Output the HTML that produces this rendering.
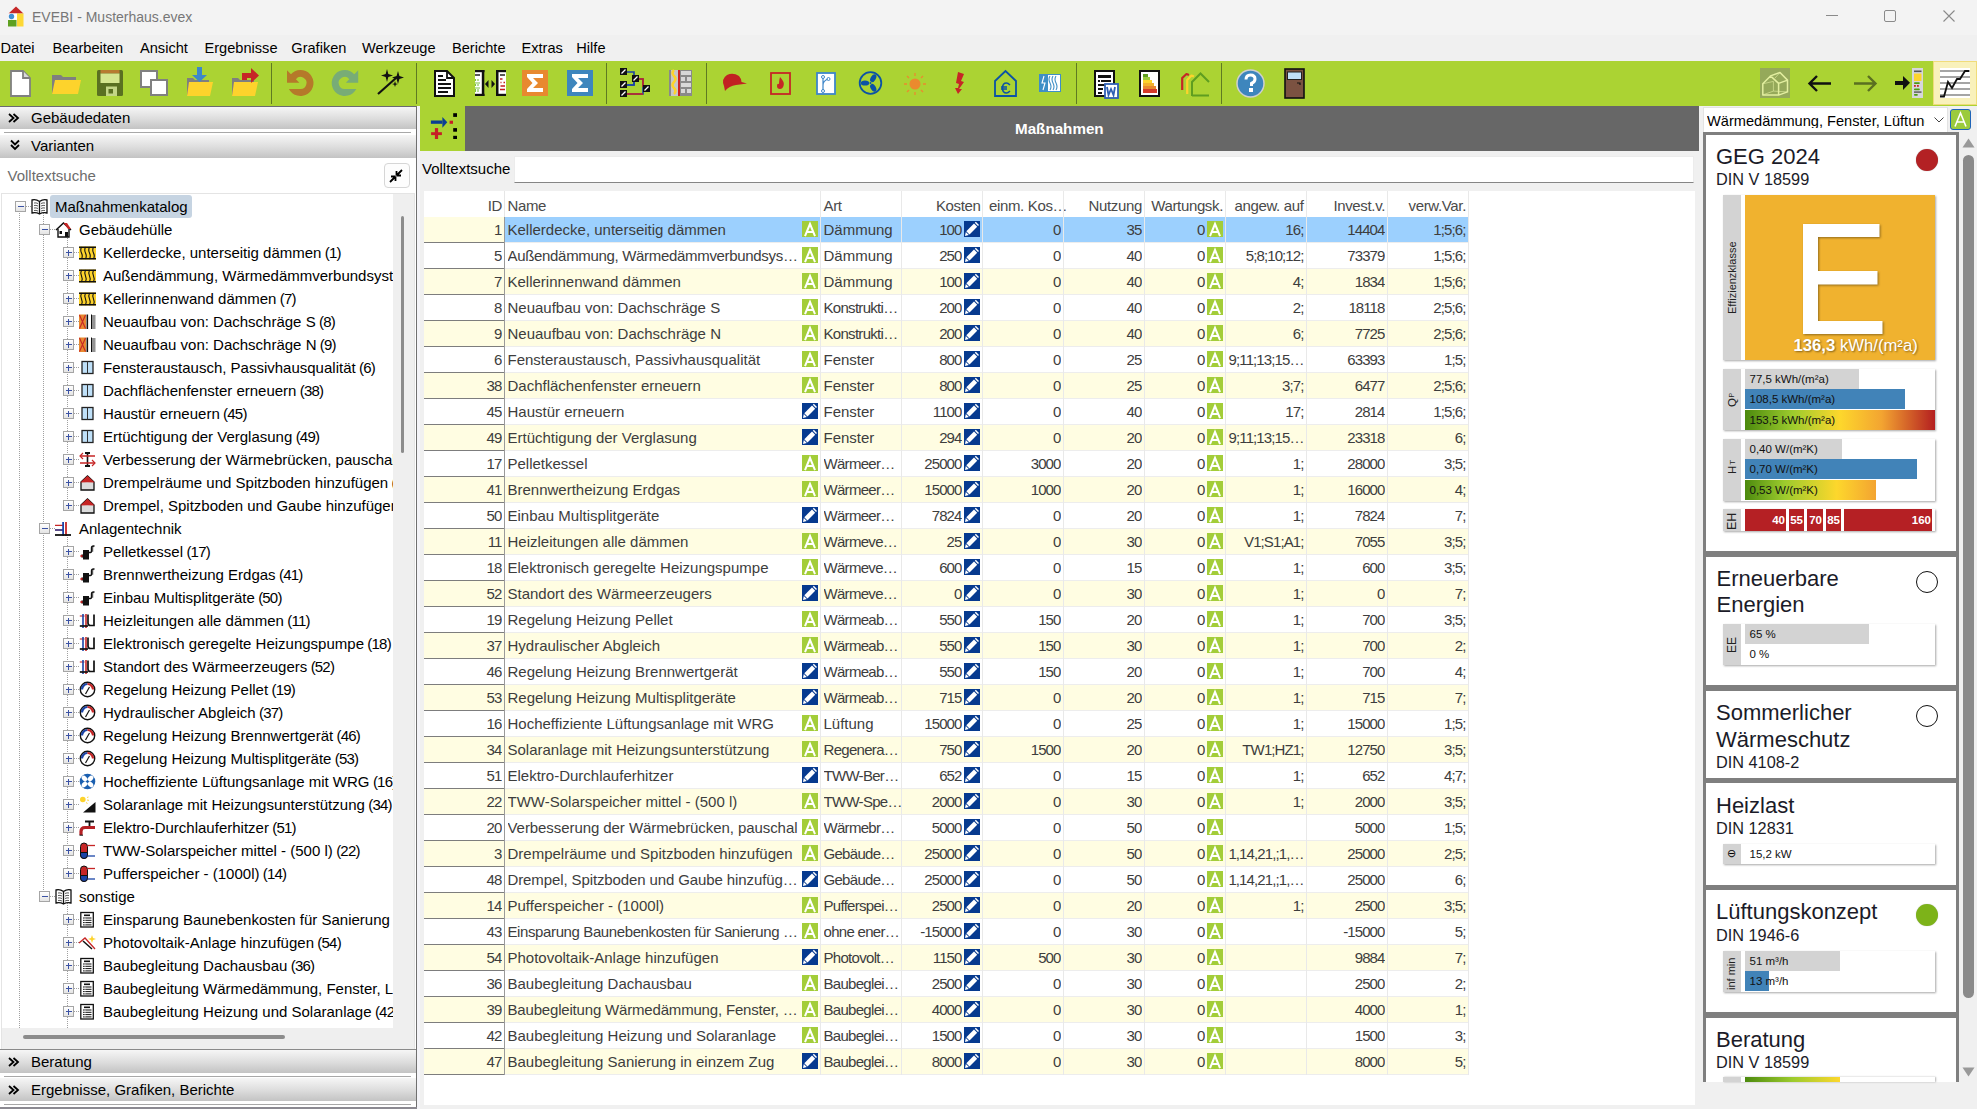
<!DOCTYPE html><html><head><meta charset="utf-8"><title>EVEBI</title><style>
*{margin:0;padding:0;box-sizing:border-box}
html,body{width:1977px;height:1109px;overflow:hidden;background:#f0f0f0;font-family:"Liberation Sans",sans-serif;color:#000}
.a{position:absolute}
.t{position:absolute;white-space:nowrap;line-height:1}
svg{position:absolute;overflow:visible}
.hdr{position:absolute;left:0;width:416px;background:linear-gradient(#f6f6f6,#dcdcdc 55%,#c3c3c3)}
.row{position:absolute;left:424px;width:1045px;height:26px}
.c{position:absolute;top:0;height:25px;line-height:25px;font-size:15px;color:#3d3d3d;white-space:nowrap;overflow:hidden}
.r{text-align:right}
.ic{position:absolute;top:4px;width:16px;height:16px}
.tr{position:absolute;height:23px;line-height:23px;font-size:15px;white-space:nowrap}
.card{position:absolute;left:1706px;width:250px;background:#fff}
.ctit{position:absolute;left:10px;font-size:21.5px;line-height:26px;color:#1b1b28;white-space:nowrap}
.csub{position:absolute;left:10px;font-size:16.3px;line-height:1;color:#1b1b28;white-space:nowrap}
.box{position:absolute;left:1723px;width:212px;background:#fff;box-shadow:1px 1px 2px rgba(0,0,0,.35)}
.strip{position:absolute;left:0;top:0;bottom:0;width:18px;background:#d3d3d3}
.bar{position:absolute;left:22px;height:20px;font-size:11.5px;line-height:20px;color:#111;padding-left:4.5px;white-space:nowrap}
.vt{position:absolute;transform:rotate(-90deg);transform-origin:0 0;font-size:11px;line-height:1;white-space:nowrap;color:#222}
</style></head><body><div class="a" style="left:0;top:0;width:1977px;height:35px;background:#f3f3f3"></div><svg style="left:8px;top:6px" width="17" height="21" viewBox="0 0 17 21"><path d="M0.5 7.5L8 0.5L15.5 7.5Z" fill="#c62828"/><rect x="0.5" y="7.5" width="8.5" height="6" fill="#fff"/><circle cx="3.5" cy="10.5" r="2.7" fill="#3f8fd2"/><rect x="0" y="14" width="8.5" height="6.5" fill="#5ea020"/><rect x="9" y="7.5" width="6.5" height="13" fill="#fdd835"/></svg><div class="t" style="left:32px;top:10px;font-size:14px;color:#777">EVEBI - Musterhaus.evex</div><div class="a" style="left:1826px;top:15px;width:12px;height:1px;background:#8a8a8a"></div><div class="a" style="left:1884px;top:10px;width:12px;height:12px;border:1px solid #8a8a8a;border-radius:2px"></div><svg style="left:1943px;top:10px" width="12" height="12"><path d="M0.5 0.5L11.5 11.5M11.5 0.5L0.5 11.5" stroke="#8a8a8a" stroke-width="1.1"/></svg><div class="t" style="left:0.5px;top:40.5px;font-size:14.6px">Datei</div><div class="t" style="left:52.5px;top:40.5px;font-size:14.6px">Bearbeiten</div><div class="t" style="left:140px;top:40.5px;font-size:14.6px">Ansicht</div><div class="t" style="left:204.5px;top:40.5px;font-size:14.6px">Ergebnisse</div><div class="t" style="left:291.3px;top:40.5px;font-size:14.6px">Grafiken</div><div class="t" style="left:362px;top:40.5px;font-size:14.6px">Werkzeuge</div><div class="t" style="left:452px;top:40.5px;font-size:14.6px">Berichte</div><div class="t" style="left:521.5px;top:40.5px;font-size:14.6px">Extras</div><div class="t" style="left:576.3px;top:40.5px;font-size:14.6px">Hilfe</div><div class="a" style="left:0;top:61px;width:1977px;height:45px;background:#abd333"></div><div class="a" style="left:1933px;top:61px;width:44px;height:44px;background:#f9f1bb;border:1px solid #f0dc7a"></div><div class="a" style="left:270.5px;top:63px;width:1px;height:41px;background:#5f7a22"></div><div class="a" style="left:415.5px;top:63px;width:1px;height:41px;background:#5f7a22"></div><div class="a" style="left:606px;top:63px;width:1px;height:41px;background:#5f7a22"></div><div class="a" style="left:705.5px;top:63px;width:1px;height:41px;background:#5f7a22"></div><div class="a" style="left:1075.5px;top:63px;width:1px;height:41px;background:#5f7a22"></div><div class="a" style="left:1220.5px;top:63px;width:1px;height:41px;background:#5f7a22"></div><svg style="left:10px;top:70px" width="21" height="27" viewBox="0 0 21 27"><path d="M1 1H13L20 8V26H1Z" fill="#fff" stroke="#808080" stroke-width="1.8"/><path d="M13 1V8H20" fill="#d9d9d9" stroke="#808080" stroke-width="1.8"/></svg><svg style="left:52px;top:74px" width="29" height="21" viewBox="0 0 29 21"><path d="M0 1H9L11 3H24V20H0Z" fill="#7f7f7f"/><path d="M3 6H29L26 20H0Z" fill="#fdd32c"/></svg><svg style="left:97px;top:70px" width="26" height="27" viewBox="0 0 26 27"><rect x="0" y="0" width="26" height="26" rx="1.5" fill="#5a7021"/><rect x="3.5" y="0" width="19" height="3.5" fill="#b77b30"/><rect x="3.5" y="3.5" width="19" height="9.5" fill="#d5e68f"/><rect x="9" y="16.5" width="11" height="9.5" fill="#c3d686"/><rect x="11.5" y="19" width="4.5" height="4.5" fill="#5a7021"/></svg><svg style="left:140px;top:70px" width="28" height="26" viewBox="0 0 28 26"><rect x="1" y="1" width="16" height="16" fill="#fff" stroke="#808080" stroke-width="2"/><rect x="11" y="10" width="16" height="15" fill="#fff" stroke="#808080" stroke-width="2"/><rect x="12" y="11" width="4" height="5" fill="#fff"/></svg><svg style="left:187px;top:67px" width="27" height="30" viewBox="0 0 27 30"><path d="M0 11H6L8 13H22V29H0Z" fill="#7f7f7f"/><path d="M2 15H26L23 29H0Z" fill="#fdd32c"/><path d="M10 0H15V8H20L12.5 15L5 8H10Z" fill="#3d87c9"/></svg><svg style="left:232px;top:67px" width="29" height="30" viewBox="0 0 29 30"><path d="M0 11H6L8 13H22V29H0Z" fill="#7f7f7f"/><path d="M2 15H26L23 29H0Z" fill="#fdd32c"/><path d="M10 10V6H19V1L27 8.5L19 16V11H15V13H10Z" fill="#c62626"/></svg><svg style="left:287px;top:70px" width="27" height="27" viewBox="0 0 27 27"><path d="M1.9 18.9A13 13 0 1 0 3.54 4.64L8.9 9.14A6 6 0 1 1 12.46 18.9Z M0 0.3V12.8H12.4Z" fill="#b5792a"/></svg><svg style="left:332px;top:70px" width="27" height="27" viewBox="0 0 27 27"><path transform="translate(26.2,0) scale(-1,1)" d="M1.9 18.9A13 13 0 1 0 3.54 4.64L8.9 9.14A6 6 0 1 1 12.46 18.9Z M0 0.3V12.8H12.4Z" fill="#78ac76"/></svg><svg style="left:377px;top:68px" width="28" height="27" viewBox="0 0 28 27"><path d="M1 26L19 10" stroke="#111" stroke-width="2.2"/><path d="M10 1L11.3 6L16 7.5L11.3 9L10 14L8.7 9L4 7.5L8.7 6Z" fill="#111"/><path d="M21 3L22.4 8L27 9.5L22.4 11L21 16L19.6 11L15 9.5L19.6 8Z" fill="#111"/><path d="M18 13L18.8 15.5L21 16L18.8 16.7L18 19L17.2 16.7L15 16L17.2 15.5Z" fill="#111"/></svg><svg style="left:434px;top:70px" width="21" height="27" viewBox="0 0 21 27"><path d="M1 1H13L20 8V26H1Z" fill="#fff" stroke="#111" stroke-width="2"/><path d="M13 1V8H20" fill="none" stroke="#111" stroke-width="1.8"/><path d="M4 6H9M4 10H12M4 14H17M4 18H17M4 22H14" stroke="#111" stroke-width="2"/></svg><svg style="left:474px;top:70px" width="32" height="27" viewBox="0 0 32 27"><rect x="1" y="0" width="9" height="26" fill="#fff"/><rect x="1" y="0" width="9.5" height="2.2" fill="#111"/><rect x="1" y="23.8" width="9.5" height="2.2" fill="#111"/><rect x="7.8" y="0" width="2.5" height="26" fill="#111"/><path d="M1 5H6" stroke="#111" stroke-width="1.4"/><path d="M1.5 9V11M4 9V11M1.5 14V16M4 14V16M1.5 19V22M4 19V22M1 13H6M1 18H6" stroke="#7cc242" stroke-width="1.1"/><path d="M11 14L14.5 10V18Z" fill="#111"/><path d="M21 14L17.5 10V18Z" fill="#111"/><rect x="22" y="0" width="10" height="26" fill="#fff"/><rect x="22" y="0" width="10" height="2.2" fill="#111"/><rect x="22" y="23.8" width="10" height="2.2" fill="#111"/><rect x="22" y="0" width="2.5" height="26" fill="#111"/><path d="M26 5H31" stroke="#111" stroke-width="1.4"/><path d="M26 9H28.5M26.5 12.5H27.5M29.5 12.5H31M26.5 16H31M26 19.5H31" stroke="#c41e1e" stroke-width="1.4"/></svg><svg style="left:522px;top:70px" width="26" height="26" viewBox="0 0 26 26"><rect width="26" height="26" fill="#e8892f"/><path d="M5 4H21V8H11L16 13L11 18H21V22H5V19L10.5 13L5 7Z" fill="#fff"/></svg><svg style="left:567px;top:70px" width="26" height="26" viewBox="0 0 26 26"><rect width="26" height="26" fill="#3e86bd"/><path d="M5 4H21V8H11L16 13L11 18H21V22H5V19L10.5 13L5 7Z" fill="#fff"/></svg><svg style="left:620px;top:68px" width="31" height="29" viewBox="0 0 31 29"><path d="M6 4H14V11M6 17H14V11M16 11H23V19M6 26H23V19" fill="none" stroke="#1a44a8" stroke-width="1.6"/><path d="M16 11H23V19M6 26H23" fill="none" stroke="#cc2222" stroke-width="1.6"/><path d="M6 17H14V13" fill="none" stroke="#1a44a8" stroke-width="1.6"/><rect x="0" y="0" width="7" height="7" fill="#111"/><rect x="12" y="7" width="7" height="7" fill="#111"/><rect x="0" y="13" width="7" height="7" fill="#111"/><rect x="0" y="22" width="7" height="7" fill="#111"/><rect x="23" y="17" width="7" height="7" fill="#111"/><path d="M1.5 5.5L5.5 1.5M13.5 12.5L17.5 8.5M1.5 18.5L5.5 14.5M1.5 27.5L5.5 23.5M24.5 22.5L28.5 18.5" stroke="#fff" stroke-width="1.3"/></svg><svg style="left:669px;top:70px" width="23" height="26" viewBox="0 0 23 26"><rect x="0" y="0" width="2" height="26" fill="#8a8a8a"/><path d="M2 0H9V26H2Z" fill="#c8c8c8"/><path d="M5 0Q2 3 5 6Q8 9 5 12Q2 15 5 18Q8 21 5 24" fill="none" stroke="#fdd32c" stroke-width="2.5"/><rect x="9" y="0" width="2" height="26" fill="#cc2222"/><rect x="11" y="0" width="12" height="26" fill="#8a8a8a"/><path d="M12 1H22V5H12ZM12 7H16V11H12ZM18 7H22V11H18ZM12 13H22V17H12ZM12 19H16V23H12ZM18 19H22V23H18Z" fill="#d8d8d8"/></svg><svg style="left:722px;top:73px" width="26" height="19" viewBox="0 0 26 19"><path d="M2 13Q-1 6 5 2Q11 -1 17 3Q19 5 19.5 9L25 10.5Q20 11 14 12Q7 13 3 18Z" fill="#c12222"/></svg><svg style="left:770px;top:72px" width="21" height="23" viewBox="0 0 21 23"><rect x="1" y="1" width="19" height="21" fill="none" stroke="#c62626" stroke-width="1.8"/><path d="M10 5Q15 10 13.5 14Q12.5 17 10 17Q7 17 7 14Q7 11 9 12Q9 8 10 5Z" fill="#c62626"/></svg><svg style="left:816px;top:72px" width="20" height="23" viewBox="0 0 20 23"><rect x="1" y="1" width="18" height="21" fill="#fff" stroke="#3e86c9" stroke-width="1.8"/><path d="M7 5V19M7 13Q7 9 12 7" fill="none" stroke="#3e86c9" stroke-width="1.2"/><circle cx="7" cy="5" r="1.5" fill="#fff" stroke="#3e86c9"/><circle cx="7" cy="19" r="1.5" fill="#fff" stroke="#3e86c9"/><circle cx="12.5" cy="7" r="1.5" fill="#fff" stroke="#3e86c9"/></svg><svg style="left:858px;top:71px" width="25" height="24" viewBox="0 0 25 24"><circle cx="12.5" cy="12" r="10.8" fill="none" stroke="#0b52a6" stroke-width="1.8"/><g fill="#0b52a6"><ellipse cx="12.5" cy="6.5" rx="2.6" ry="4.2" transform="rotate(30 12.5 12)"/><ellipse cx="12.5" cy="6.5" rx="2.6" ry="4.2" transform="rotate(150 12.5 12)"/><ellipse cx="12.5" cy="6.5" rx="2.6" ry="4.2" transform="rotate(270 12.5 12)"/><circle cx="12.5" cy="12" r="1"/></g></svg><svg style="left:904px;top:72px" width="22" height="24" viewBox="0 0 22 24"><circle cx="11" cy="12" r="5.5" fill="#ea8a2e"/><g stroke="#ea8a2e" stroke-width="1.3"><path d="M11 1V4M11 20V23M0 12H3M19 12H22M3 4L5 6M17 18L19 20M3 20L5 18M17 6L19 4"/></g></svg><svg style="left:955px;top:72px" width="10" height="22" viewBox="0 0 10 22"><path d="M3 0L9 2L6 9L9 10L4 17L7 17L3 22L0 16L3 16L4 12L1 11Z" fill="#c62626"/></svg><svg style="left:994px;top:70px" width="23" height="27" viewBox="0 0 23 27"><path d="M1 11L11.5 1L22 11V26H1Z" fill="none" stroke="#0b52a6" stroke-width="1.8"/><path d="M16 15Q14 13 12.5 13Q8.5 13 8.5 18Q8.5 23 12.5 23Q14 23 16 21M7 17H13M7 19H13" fill="none" stroke="#0b52a6" stroke-width="1.5"/></svg><svg style="left:1039px;top:74px" width="23" height="19" viewBox="0 0 23 19"><rect width="22" height="18" fill="#3e8fc6"/><path d="M5 2L3 9H6L4 16" fill="none" stroke="#fff" stroke-width="1.1"/><rect x="9" y="1" width="12" height="16" fill="#fff"/><path d="M11 2Q9 5 11 9Q13 13 11 16M14 2Q12 5 14 9Q16 13 14 16M17 2Q15 5 17 9Q19 13 17 16" fill="none" stroke="#3e8fc6" stroke-width="1.1"/></svg><svg style="left:1094px;top:70px" width="25" height="29" viewBox="0 0 25 29"><rect x="1" y="1" width="19" height="25" fill="#fff" stroke="#111" stroke-width="2"/><path d="M4 5H17V8H4Z M7 10H17V12H7Z M4 10H6V12H4Z M4 14H11V16H4Z M4 18H9V20H4Z M4 22H8V24H4Z" fill="#111"/><rect x="11" y="14" width="13" height="14" fill="#fff" stroke="#2e5fb4" stroke-width="1.8"/><path d="M13 17L14.5 25L17 19L19.5 25L21 17" fill="none" stroke="#2e5fb4" stroke-width="1.8"/></svg><svg style="left:1139px;top:70px" width="21" height="27" viewBox="0 0 21 27"><rect x="1" y="1" width="19" height="25" fill="#fff" stroke="#111" stroke-width="2"/><rect x="4" y="4" width="5" height="3" fill="#5e9e20"/><rect x="4" y="7" width="7" height="3" fill="#9bcb3c"/><rect x="4" y="10" width="9" height="3" fill="#fdd32c"/><rect x="4" y="13" width="11" height="3" fill="#f2b02f"/><rect x="4" y="16" width="13" height="3" fill="#e8892f"/><rect x="4" y="19" width="14" height="4" fill="#d63b2b"/></svg><svg style="left:1181px;top:71px" width="30" height="26" viewBox="0 0 30 26"><path d="M1.2 19V7L5.5 3L8 4" fill="none" stroke="#c62626" stroke-width="2.2" stroke-linejoin="round"/><path d="M6.2 23V9L10.5 4.5L13 5.5" fill="none" stroke="#fdd32c" stroke-width="2.2" stroke-linejoin="round"/><path d="M11 25V11L19.5 2.5L28 11M11 24.5H28" fill="none" stroke="#5e9e20" stroke-width="2"/></svg><svg style="left:1236px;top:69px" width="29" height="29" viewBox="0 0 29 29"><circle cx="14.5" cy="14.5" r="13.5" fill="#3e86bd" stroke="#d0d0d0" stroke-width="1.5"/><path d="M10 10.5Q10 6 14.5 6Q19 6 19 10Q19 13 15.5 14.5V17" fill="none" stroke="#fff" stroke-width="3"/><rect x="13" y="19" width="4" height="4" fill="#fff"/></svg><svg style="left:1284px;top:68px" width="21" height="31" viewBox="0 0 21 31"><rect x="1" y="1" width="19" height="29" fill="#7b5241" stroke="#111" stroke-width="1.6"/><rect x="3.5" y="4" width="14" height="7.5" fill="#bfe0f8" stroke="#222" stroke-width="1"/><path d="M13 15H16V17" fill="none" stroke="#111" stroke-width="1.2"/></svg><svg style="left:1760px;top:68px" width="30" height="30" viewBox="0 0 30 30"><rect width="30" height="30" fill="#95a95a"/><g fill="none" stroke="#e3efa0" stroke-linejoin="round"><path d="M2.8 26.9V15.8L10.5 7.9L20 4.5L27.5 12.1V23.9L18.6 27.1Z M10.5 7.9L18.6 15.4V27.1 M18.6 15.4L27.5 12.1" stroke-width="1.5"/><path d="M2.8 15.8L13.4 13.4V23.1L2.8 26.9 M13.4 23.1L27.5 23.9 M20 4.5L15 10" stroke-width="1" opacity=".6"/></g></svg><svg style="left:1807px;top:74px" width="25" height="19" viewBox="0 0 25 19"><path d="M24 9.5H3M10 2L2.5 9.5L10 17" fill="none" stroke="#111" stroke-width="2.4"/></svg><svg style="left:1854px;top:74px" width="25" height="19" viewBox="0 0 25 19"><path d="M0 9.5H21M14 2L21.5 9.5L14 17" fill="none" stroke="#5a7021" stroke-width="2.4"/></svg><svg style="left:1894px;top:68px" width="30" height="30" viewBox="0 0 30 30"><path d="M1 13H9V8L16 14.8L9 22V17H1Z" fill="#111"/><rect x="18" y="0" width="11" height="30" fill="#d6d6dc"/><rect x="20" y="2.5" width="7.5" height="1.6" fill="#555"/><rect x="20" y="5.5" width="7.5" height="7.5" fill="#fdd32c"/><rect x="20" y="14.3" width="5.8" height="1.7" rx=".8" fill="#4c9a10"/><rect x="20" y="17" width="1.8" height="1.8" fill="#c62626"/><rect x="23" y="17" width="1.8" height="1.8" fill="#c62626"/><rect x="20" y="20.5" width="5.8" height="1.7" rx=".8" fill="#4c9a10"/><rect x="20" y="23.3" width="7.5" height="1.6" fill="#666"/><rect x="20" y="26" width="3.8" height="1.7" rx=".8" fill="#4c9a10"/></svg><svg style="left:1940px;top:68px" width="31" height="30" viewBox="0 0 31 30"><rect width="30" height="30" fill="#fff"/><path d="M0 3H30M0 9H30M0 15H30M0 21H30M0 27H30" stroke="#888" stroke-width="1.6"/><path d="M0 28.5H4L8 14L12 20L17 11H20L25 3H29" fill="none" stroke="#111" stroke-width="1.8"/></svg><div class="a" style="left:0;top:106px;width:417px;height:1003px;background:#fff;border-right:1px solid #707070;border-top:1px solid #6a6a72"></div><div class="a" style="left:417px;top:106px;width:3px;height:1003px;background:#f4f4f8"></div><div class="hdr" style="top:107px;height:22px"></div><div class="a" style="left:4px;top:132px;width:407px;height:1px;background:#a8a8a8"></div><div class="hdr" style="top:135px;height:23px"></div><svg style="left:8px;top:113px" width="11" height="10"><path d="M1 1L5.5 5L1 9M5.5 1L10 5L5.5 9" fill="none" stroke="#000" stroke-width="1.8"/></svg><div class="t" style="left:31px;top:109.5px;font-size:15px">Gebäudedaten</div><svg style="left:10px;top:139px" width="10" height="12"><path d="M1 1.5L5 5.5L9 1.5M1 6L5 10L9 6" fill="none" stroke="#000" stroke-width="1.8"/></svg><div class="t" style="left:31px;top:137.5px;font-size:15px">Varianten</div><div class="t" style="left:7.5px;top:168px;font-size:15px;color:#6d6d6d">Volltextsuche</div><div class="a" style="left:384px;top:163px;width:26px;height:25px;border:1px solid #d6d6d6;border-radius:4px;background:#fdfdfd"></div><svg style="left:386px;top:166px" width="20" height="20"><path d="M4 16L9.5 10.5M9.5 10.5V15M9.5 10.5H5M16 4L10.5 9.5M10.5 9.5V5M10.5 9.5H15" fill="none" stroke="#000" stroke-width="1.8"/></svg><div class="a" style="left:1px;top:193px;width:414px;height:857px;background:#efefef;border:1px solid #e4e4e4"></div><div class="a" style="left:2px;top:194px;width:391px;height:834px;background:#fff"></div><div class="a" style="left:401px;top:216px;width:3px;height:237px;background:#8c8c8c;border-radius:2px"></div><div class="a" style="left:23px;top:1035px;width:262px;height:3.5px;background:#8c8c8c;border-radius:2px"></div><div class="a" style="left:2px;top:194px;width:391px;height:834px;overflow:hidden"><div class="a" style="left:-2px;top:-194px;width:420px;height:1300px"><div class="a" style="left:19px;top:213px;width:1px;height:817px;background:repeating-linear-gradient(#a0a0a0 0 1px,transparent 1px 2px)"></div><div class="a" style="left:43px;top:213px;width:1px;height:683px;background:repeating-linear-gradient(#a0a0a0 0 1px,transparent 1px 2px)"></div><div class="a" style="left:44px;top:229px;width:11px;height:1px;background:repeating-linear-gradient(90deg,#a0a0a0 0 1px,transparent 1px 2px)"></div><div class="a" style="left:44px;top:528px;width:11px;height:1px;background:repeating-linear-gradient(90deg,#a0a0a0 0 1px,transparent 1px 2px)"></div><div class="a" style="left:44px;top:896px;width:11px;height:1px;background:repeating-linear-gradient(90deg,#a0a0a0 0 1px,transparent 1px 2px)"></div><div class="a" style="left:67px;top:236px;width:1px;height:269px;background:repeating-linear-gradient(#a0a0a0 0 1px,transparent 1px 2px)"></div><div class="a" style="left:67px;top:535px;width:1px;height:338px;background:repeating-linear-gradient(#a0a0a0 0 1px,transparent 1px 2px)"></div><div class="a" style="left:67px;top:903px;width:1px;height:128px;background:repeating-linear-gradient(#a0a0a0 0 1px,transparent 1px 2px)"></div><div class="a" style="left:26px;top:206px;width:5px;height:1px;background:repeating-linear-gradient(90deg,#a0a0a0 0 1px,transparent 1px 2px)"></div><div class="a" style="left:15px;top:200.5px;width:11px;height:11px;border:1px solid #a5a5a5;background:linear-gradient(#fff,#e4e4e4)"></div><div class="a" style="left:17.5px;top:206px;width:6px;height:1.2px;background:#3b52a4"></div><svg style="left:31px;top:198px" width="17" height="17" viewBox="0 0 17 17"><path d="M8.5 3.5Q5 1 1 2V15Q5 14 8.5 16Q12 14 16 15V2Q12 1 8.5 3.5V16" fill="#fff" stroke="#111" stroke-width="1.3"/><path d="M3 5Q5 4.5 7 5.5M3 7.5Q5 7 7 8M3 10Q5 9.5 7 10.5M3 12.5Q5 12 7 13M10 5.5Q12 4.5 14 5M10 8Q12 7 14 7.5M10 10.5Q12 9.5 14 10M10 13Q12 12 14 12.5" stroke="#333" stroke-width="0.8" fill="none"/></svg><div class="a" style="left:50px;top:195px;width:142px;height:23px;background:#c6d4e2;border-radius:3px"></div><div class="tr" style="left:55px;top:195px">Maßnahmenkatalog</div><div class="a" style="left:50px;top:229px;width:5px;height:1px;background:repeating-linear-gradient(90deg,#a0a0a0 0 1px,transparent 1px 2px)"></div><div class="a" style="left:39px;top:223.5px;width:11px;height:11px;border:1px solid #a5a5a5;background:linear-gradient(#fff,#e4e4e4)"></div><div class="a" style="left:41.5px;top:229px;width:6px;height:1.2px;background:#3b52a4"></div><svg style="left:55px;top:221px" width="17" height="17" viewBox="0 0 17 17"><path d="M1 9L8.5 2L16 9" fill="none" stroke="#111" stroke-width="1.5"/><path d="M8.5 2L12 2L16 8L13 8Z" fill="#c62626"/><path d="M3 8V16H14V8" fill="#fff" stroke="#111" stroke-width="1.4"/><rect x="4.5" y="10" width="2.5" height="3" fill="#111"/><rect x="10" y="11" width="3" height="5" fill="#111"/></svg><div class="tr" style="left:79px;top:218px">Gebäudehülle</div><div class="a" style="left:74px;top:252px;width:5px;height:1px;background:repeating-linear-gradient(90deg,#a0a0a0 0 1px,transparent 1px 2px)"></div><div class="a" style="left:63px;top:246.5px;width:11px;height:11px;border:1px solid #a5a5a5;background:linear-gradient(#fff,#e4e4e4)"></div><div class="a" style="left:65.5px;top:252px;width:6px;height:1.2px;background:#3b52a4"></div><div class="a" style="left:68px;top:249.5px;width:1.2px;height:6px;background:#3b52a4"></div><svg style="left:79px;top:244px" width="17" height="17" viewBox="0 0 17 17"><rect x="0" y="2.5" width="17" height="13" fill="#fdd32c"/><path d="M0 3.2H17M0 14.8H17" stroke="#111" stroke-width="1.4"/><path d="M2.5 3Q1 6 2.5 9Q4 12 2.5 15M6.5 3Q5 6 6.5 9Q8 12 6.5 15M10.5 3Q9 6 10.5 9Q12 12 10.5 15M14.5 3Q13 6 14.5 9Q16 12 14.5 15" fill="none" stroke="#111" stroke-width="1.1"/></svg><div class="tr" style="left:103px;top:241px">Kellerdecke, unterseitig dämmen<span style="letter-spacing:-0.8px"> (1)</span></div><div class="a" style="left:74px;top:275px;width:5px;height:1px;background:repeating-linear-gradient(90deg,#a0a0a0 0 1px,transparent 1px 2px)"></div><div class="a" style="left:63px;top:269.5px;width:11px;height:11px;border:1px solid #a5a5a5;background:linear-gradient(#fff,#e4e4e4)"></div><div class="a" style="left:65.5px;top:275px;width:6px;height:1.2px;background:#3b52a4"></div><div class="a" style="left:68px;top:272.5px;width:1.2px;height:6px;background:#3b52a4"></div><svg style="left:79px;top:267px" width="17" height="17" viewBox="0 0 17 17"><rect x="0" y="2.5" width="17" height="13" fill="#fdd32c"/><path d="M0 3.2H17M0 14.8H17" stroke="#111" stroke-width="1.4"/><path d="M2.5 3Q1 6 2.5 9Q4 12 2.5 15M6.5 3Q5 6 6.5 9Q8 12 6.5 15M10.5 3Q9 6 10.5 9Q12 12 10.5 15M14.5 3Q13 6 14.5 9Q16 12 14.5 15" fill="none" stroke="#111" stroke-width="1.1"/></svg><div class="tr" style="left:103px;top:264px">Außendämmung, Wärmedämmverbundsystem<span style="letter-spacing:-0.8px"> (5)</span></div><div class="a" style="left:74px;top:298px;width:5px;height:1px;background:repeating-linear-gradient(90deg,#a0a0a0 0 1px,transparent 1px 2px)"></div><div class="a" style="left:63px;top:292.5px;width:11px;height:11px;border:1px solid #a5a5a5;background:linear-gradient(#fff,#e4e4e4)"></div><div class="a" style="left:65.5px;top:298px;width:6px;height:1.2px;background:#3b52a4"></div><div class="a" style="left:68px;top:295.5px;width:1.2px;height:6px;background:#3b52a4"></div><svg style="left:79px;top:290px" width="17" height="17" viewBox="0 0 17 17"><rect x="0" y="2.5" width="17" height="13" fill="#fdd32c"/><path d="M0 3.2H17M0 14.8H17" stroke="#111" stroke-width="1.4"/><path d="M2.5 3Q1 6 2.5 9Q4 12 2.5 15M6.5 3Q5 6 6.5 9Q8 12 6.5 15M10.5 3Q9 6 10.5 9Q12 12 10.5 15M14.5 3Q13 6 14.5 9Q16 12 14.5 15" fill="none" stroke="#111" stroke-width="1.1"/></svg><div class="tr" style="left:103px;top:287px">Kellerinnenwand dämmen<span style="letter-spacing:-0.8px"> (7)</span></div><div class="a" style="left:74px;top:321px;width:5px;height:1px;background:repeating-linear-gradient(90deg,#a0a0a0 0 1px,transparent 1px 2px)"></div><div class="a" style="left:63px;top:315.5px;width:11px;height:11px;border:1px solid #a5a5a5;background:linear-gradient(#fff,#e4e4e4)"></div><div class="a" style="left:65.5px;top:321px;width:6px;height:1.2px;background:#3b52a4"></div><div class="a" style="left:68px;top:318.5px;width:1.2px;height:6px;background:#3b52a4"></div><svg style="left:79px;top:313px" width="17" height="17" viewBox="0 0 17 17"><rect x="0" y="1.5" width="7" height="14.5" fill="#e8892f"/><path d="M0.5 2L6.5 15.5M6.5 2L0.5 15.5" stroke="#c62626" stroke-width="1.1"/><rect x="7.5" y="1.5" width="1.6" height="14.5" fill="#111"/><rect x="12" y="1.5" width="4.5" height="14.5" fill="#fff"/><path d="M12.5 1.5V16" stroke="#111" stroke-width="1"/><path d="M12.5 3H16.5M12.5 5H16.5M12.5 7H16.5M12.5 9H16.5M12.5 11H16.5M12.5 13H16.5M12.5 15H16.5" stroke="#111" stroke-width="0.9"/></svg><div class="tr" style="left:103px;top:310px">Neuaufbau von: Dachschräge S<span style="letter-spacing:-0.8px"> (8)</span></div><div class="a" style="left:74px;top:344px;width:5px;height:1px;background:repeating-linear-gradient(90deg,#a0a0a0 0 1px,transparent 1px 2px)"></div><div class="a" style="left:63px;top:338.5px;width:11px;height:11px;border:1px solid #a5a5a5;background:linear-gradient(#fff,#e4e4e4)"></div><div class="a" style="left:65.5px;top:344px;width:6px;height:1.2px;background:#3b52a4"></div><div class="a" style="left:68px;top:341.5px;width:1.2px;height:6px;background:#3b52a4"></div><svg style="left:79px;top:336px" width="17" height="17" viewBox="0 0 17 17"><rect x="0" y="1.5" width="7" height="14.5" fill="#e8892f"/><path d="M0.5 2L6.5 15.5M6.5 2L0.5 15.5" stroke="#c62626" stroke-width="1.1"/><rect x="7.5" y="1.5" width="1.6" height="14.5" fill="#111"/><rect x="12" y="1.5" width="4.5" height="14.5" fill="#fff"/><path d="M12.5 1.5V16" stroke="#111" stroke-width="1"/><path d="M12.5 3H16.5M12.5 5H16.5M12.5 7H16.5M12.5 9H16.5M12.5 11H16.5M12.5 13H16.5M12.5 15H16.5" stroke="#111" stroke-width="0.9"/></svg><div class="tr" style="left:103px;top:333px">Neuaufbau von: Dachschräge N<span style="letter-spacing:-0.8px"> (9)</span></div><div class="a" style="left:74px;top:367px;width:5px;height:1px;background:repeating-linear-gradient(90deg,#a0a0a0 0 1px,transparent 1px 2px)"></div><div class="a" style="left:63px;top:361.5px;width:11px;height:11px;border:1px solid #a5a5a5;background:linear-gradient(#fff,#e4e4e4)"></div><div class="a" style="left:65.5px;top:367px;width:6px;height:1.2px;background:#3b52a4"></div><div class="a" style="left:68px;top:364.5px;width:1.2px;height:6px;background:#3b52a4"></div><svg style="left:79px;top:359px" width="17" height="17" viewBox="0 0 17 17"><rect x="3" y="2.5" width="11" height="12" fill="#bfe0f8" stroke="#222" stroke-width="1.3"/><path d="M8.5 2.5V14.5" stroke="#333" stroke-width="1"/></svg><div class="tr" style="left:103px;top:356px">Fensteraustausch, Passivhausqualität<span style="letter-spacing:-0.8px"> (6)</span></div><div class="a" style="left:74px;top:390px;width:5px;height:1px;background:repeating-linear-gradient(90deg,#a0a0a0 0 1px,transparent 1px 2px)"></div><div class="a" style="left:63px;top:384.5px;width:11px;height:11px;border:1px solid #a5a5a5;background:linear-gradient(#fff,#e4e4e4)"></div><div class="a" style="left:65.5px;top:390px;width:6px;height:1.2px;background:#3b52a4"></div><div class="a" style="left:68px;top:387.5px;width:1.2px;height:6px;background:#3b52a4"></div><svg style="left:79px;top:382px" width="17" height="17" viewBox="0 0 17 17"><rect x="3" y="2.5" width="11" height="12" fill="#bfe0f8" stroke="#222" stroke-width="1.3"/><path d="M8.5 2.5V14.5" stroke="#333" stroke-width="1"/></svg><div class="tr" style="left:103px;top:379px">Dachflächenfenster erneuern<span style="letter-spacing:-0.8px"> (38)</span></div><div class="a" style="left:74px;top:413px;width:5px;height:1px;background:repeating-linear-gradient(90deg,#a0a0a0 0 1px,transparent 1px 2px)"></div><div class="a" style="left:63px;top:407.5px;width:11px;height:11px;border:1px solid #a5a5a5;background:linear-gradient(#fff,#e4e4e4)"></div><div class="a" style="left:65.5px;top:413px;width:6px;height:1.2px;background:#3b52a4"></div><div class="a" style="left:68px;top:410.5px;width:1.2px;height:6px;background:#3b52a4"></div><svg style="left:79px;top:405px" width="17" height="17" viewBox="0 0 17 17"><rect x="3" y="2.5" width="11" height="12" fill="#bfe0f8" stroke="#222" stroke-width="1.3"/><path d="M8.5 2.5V14.5" stroke="#333" stroke-width="1"/></svg><div class="tr" style="left:103px;top:402px">Haustür erneuern<span style="letter-spacing:-0.8px"> (45)</span></div><div class="a" style="left:74px;top:436px;width:5px;height:1px;background:repeating-linear-gradient(90deg,#a0a0a0 0 1px,transparent 1px 2px)"></div><div class="a" style="left:63px;top:430.5px;width:11px;height:11px;border:1px solid #a5a5a5;background:linear-gradient(#fff,#e4e4e4)"></div><div class="a" style="left:65.5px;top:436px;width:6px;height:1.2px;background:#3b52a4"></div><div class="a" style="left:68px;top:433.5px;width:1.2px;height:6px;background:#3b52a4"></div><svg style="left:79px;top:428px" width="17" height="17" viewBox="0 0 17 17"><rect x="3" y="2.5" width="11" height="12" fill="#bfe0f8" stroke="#222" stroke-width="1.3"/><path d="M8.5 2.5V14.5" stroke="#333" stroke-width="1"/></svg><div class="tr" style="left:103px;top:425px">Ertüchtigung der Verglasung<span style="letter-spacing:-0.8px"> (49)</span></div><div class="a" style="left:74px;top:459px;width:5px;height:1px;background:repeating-linear-gradient(90deg,#a0a0a0 0 1px,transparent 1px 2px)"></div><div class="a" style="left:63px;top:453.5px;width:11px;height:11px;border:1px solid #a5a5a5;background:linear-gradient(#fff,#e4e4e4)"></div><div class="a" style="left:65.5px;top:459px;width:6px;height:1.2px;background:#3b52a4"></div><div class="a" style="left:68px;top:456.5px;width:1.2px;height:6px;background:#3b52a4"></div><svg style="left:79px;top:451px" width="17" height="17" viewBox="0 0 17 17"><path d="M8.5 3V14" stroke="#111" stroke-width="1.6"/><path d="M1 5H16M1 12H16" stroke="#c62626" stroke-width="1.5"/><path d="M4 2L1 5L4 8M13 9L16 12L13 15" fill="none" stroke="#c62626" stroke-width="1.2"/><rect x="6" y="1" width="5" height="2" fill="#111"/><rect x="6" y="14" width="5" height="2" fill="#111"/></svg><div class="tr" style="left:103px;top:448px">Verbesserung der Wärmebrücken, pauschal<span style="letter-spacing:-0.8px"> (20)</span></div><div class="a" style="left:74px;top:482px;width:5px;height:1px;background:repeating-linear-gradient(90deg,#a0a0a0 0 1px,transparent 1px 2px)"></div><div class="a" style="left:63px;top:476.5px;width:11px;height:11px;border:1px solid #a5a5a5;background:linear-gradient(#fff,#e4e4e4)"></div><div class="a" style="left:65.5px;top:482px;width:6px;height:1.2px;background:#3b52a4"></div><div class="a" style="left:68px;top:479.5px;width:1.2px;height:6px;background:#3b52a4"></div><svg style="left:79px;top:474px" width="17" height="17" viewBox="0 0 17 17"><path d="M2 8L8.5 2L15 8V16H2Z" fill="#dcdcdc" stroke="#111" stroke-width="1.3"/><path d="M1.5 8.5L8.5 2L15.5 8.5L15 8Z" fill="#c62626"/><path d="M2 8L8.5 2L15 8L13 8L8.5 4L4 8Z" fill="#c62626"/></svg><div class="tr" style="left:103px;top:471px">Drempelräume und Spitzboden hinzufügen<span style="letter-spacing:-0.8px"> (3)</span></div><div class="a" style="left:74px;top:505px;width:5px;height:1px;background:repeating-linear-gradient(90deg,#a0a0a0 0 1px,transparent 1px 2px)"></div><div class="a" style="left:63px;top:499.5px;width:11px;height:11px;border:1px solid #a5a5a5;background:linear-gradient(#fff,#e4e4e4)"></div><div class="a" style="left:65.5px;top:505px;width:6px;height:1.2px;background:#3b52a4"></div><div class="a" style="left:68px;top:502.5px;width:1.2px;height:6px;background:#3b52a4"></div><svg style="left:79px;top:497px" width="17" height="17" viewBox="0 0 17 17"><path d="M2 8L8.5 2L15 8V16H2Z" fill="#dcdcdc" stroke="#111" stroke-width="1.3"/><path d="M1.5 8.5L8.5 2L15.5 8.5L15 8Z" fill="#c62626"/><path d="M2 8L8.5 2L15 8L13 8L8.5 4L4 8Z" fill="#c62626"/></svg><div class="tr" style="left:103px;top:494px">Drempel, Spitzboden und Gaube hinzufügen<span style="letter-spacing:-0.8px"> (48)</span></div><div class="a" style="left:50px;top:528px;width:5px;height:1px;background:repeating-linear-gradient(90deg,#a0a0a0 0 1px,transparent 1px 2px)"></div><div class="a" style="left:39px;top:522.5px;width:11px;height:11px;border:1px solid #a5a5a5;background:linear-gradient(#fff,#e4e4e4)"></div><div class="a" style="left:41.5px;top:528px;width:6px;height:1.2px;background:#3b52a4"></div><svg style="left:55px;top:520px" width="17" height="17" viewBox="0 0 17 17"><path d="M0 5.3H8M0 10H8" stroke="#c62626" stroke-width="1.3"/><path d="M0 10H8" stroke="#1a44a8" stroke-width="1.3"/><path d="M8.1 2V16" stroke="#1a44a8" stroke-width="1.8"/><path d="M11 2V16" stroke="#c62626" stroke-width="1.8"/><path d="M0 15H16" stroke="#111" stroke-width="1.8"/></svg><div class="tr" style="left:79px;top:517px">Anlagentechnik</div><div class="a" style="left:74px;top:551px;width:5px;height:1px;background:repeating-linear-gradient(90deg,#a0a0a0 0 1px,transparent 1px 2px)"></div><div class="a" style="left:63px;top:545.5px;width:11px;height:11px;border:1px solid #a5a5a5;background:linear-gradient(#fff,#e4e4e4)"></div><div class="a" style="left:65.5px;top:551px;width:6px;height:1.2px;background:#3b52a4"></div><div class="a" style="left:68px;top:548.5px;width:1.2px;height:6px;background:#3b52a4"></div><svg style="left:79px;top:543px" width="17" height="17" viewBox="0 0 17 17"><rect x="4" y="7" width="6" height="9.5" fill="#111"/><rect x="2.5" y="11.5" width="3" height="3" fill="#111"/><circle cx="2.5" cy="13" r="1.2" fill="#c62626"/><path d="M9.5 9.5H11.5Q12.5 9.5 12.5 8V5Q12.5 3 14.5 3H15.5" fill="none" stroke="#111" stroke-width="1.4"/><path d="M14.5 3.2Q13.7 3.6 13.7 5V8.8" fill="none" stroke="#111" stroke-width="0.8"/></svg><div class="tr" style="left:103px;top:540px">Pelletkessel<span style="letter-spacing:-0.8px"> (17)</span></div><div class="a" style="left:74px;top:574px;width:5px;height:1px;background:repeating-linear-gradient(90deg,#a0a0a0 0 1px,transparent 1px 2px)"></div><div class="a" style="left:63px;top:568.5px;width:11px;height:11px;border:1px solid #a5a5a5;background:linear-gradient(#fff,#e4e4e4)"></div><div class="a" style="left:65.5px;top:574px;width:6px;height:1.2px;background:#3b52a4"></div><div class="a" style="left:68px;top:571.5px;width:1.2px;height:6px;background:#3b52a4"></div><svg style="left:79px;top:566px" width="17" height="17" viewBox="0 0 17 17"><rect x="4" y="7" width="6" height="9.5" fill="#111"/><rect x="2.5" y="11.5" width="3" height="3" fill="#111"/><circle cx="2.5" cy="13" r="1.2" fill="#c62626"/><path d="M9.5 9.5H11.5Q12.5 9.5 12.5 8V5Q12.5 3 14.5 3H15.5" fill="none" stroke="#111" stroke-width="1.4"/><path d="M14.5 3.2Q13.7 3.6 13.7 5V8.8" fill="none" stroke="#111" stroke-width="0.8"/></svg><div class="tr" style="left:103px;top:563px">Brennwertheizung Erdgas<span style="letter-spacing:-0.8px"> (41)</span></div><div class="a" style="left:74px;top:597px;width:5px;height:1px;background:repeating-linear-gradient(90deg,#a0a0a0 0 1px,transparent 1px 2px)"></div><div class="a" style="left:63px;top:591.5px;width:11px;height:11px;border:1px solid #a5a5a5;background:linear-gradient(#fff,#e4e4e4)"></div><div class="a" style="left:65.5px;top:597px;width:6px;height:1.2px;background:#3b52a4"></div><div class="a" style="left:68px;top:594.5px;width:1.2px;height:6px;background:#3b52a4"></div><svg style="left:79px;top:589px" width="17" height="17" viewBox="0 0 17 17"><rect x="4" y="7" width="6" height="9.5" fill="#111"/><rect x="2.5" y="11.5" width="3" height="3" fill="#111"/><circle cx="2.5" cy="13" r="1.2" fill="#c62626"/><path d="M9.5 9.5H11.5Q12.5 9.5 12.5 8V5Q12.5 3 14.5 3H15.5" fill="none" stroke="#111" stroke-width="1.4"/><path d="M14.5 3.2Q13.7 3.6 13.7 5V8.8" fill="none" stroke="#111" stroke-width="0.8"/></svg><div class="tr" style="left:103px;top:586px">Einbau Multisplitgeräte<span style="letter-spacing:-0.8px"> (50)</span></div><div class="a" style="left:74px;top:620px;width:5px;height:1px;background:repeating-linear-gradient(90deg,#a0a0a0 0 1px,transparent 1px 2px)"></div><div class="a" style="left:63px;top:614.5px;width:11px;height:11px;border:1px solid #a5a5a5;background:linear-gradient(#fff,#e4e4e4)"></div><div class="a" style="left:65.5px;top:620px;width:6px;height:1.2px;background:#3b52a4"></div><div class="a" style="left:68px;top:617.5px;width:1.2px;height:6px;background:#3b52a4"></div><svg style="left:79px;top:612px" width="17" height="17" viewBox="0 0 17 17"><path d="M0.8 4H5.5" stroke="#c62626" stroke-width="1.1"/><path d="M4 2V16" stroke="#1a44a8" stroke-width="1.6"/><path d="M7 2V16" stroke="#c62626" stroke-width="1.6"/><path d="M9 2.5V11Q9 13.5 11.5 13.5H15V2.5" fill="none" stroke="#111" stroke-width="1.7"/><path d="M0.8 14H9" stroke="#111" stroke-width="1.7"/></svg><div class="tr" style="left:103px;top:609px">Heizleitungen alle dämmen<span style="letter-spacing:-0.8px"> (11)</span></div><div class="a" style="left:74px;top:643px;width:5px;height:1px;background:repeating-linear-gradient(90deg,#a0a0a0 0 1px,transparent 1px 2px)"></div><div class="a" style="left:63px;top:637.5px;width:11px;height:11px;border:1px solid #a5a5a5;background:linear-gradient(#fff,#e4e4e4)"></div><div class="a" style="left:65.5px;top:643px;width:6px;height:1.2px;background:#3b52a4"></div><div class="a" style="left:68px;top:640.5px;width:1.2px;height:6px;background:#3b52a4"></div><svg style="left:79px;top:635px" width="17" height="17" viewBox="0 0 17 17"><path d="M0.8 4H5.5" stroke="#c62626" stroke-width="1.1"/><path d="M4 2V16" stroke="#1a44a8" stroke-width="1.6"/><path d="M7 2V16" stroke="#c62626" stroke-width="1.6"/><path d="M9 2.5V11Q9 13.5 11.5 13.5H15V2.5" fill="none" stroke="#111" stroke-width="1.7"/><path d="M0.8 14H9" stroke="#111" stroke-width="1.7"/></svg><div class="tr" style="left:103px;top:632px">Elektronisch geregelte Heizungspumpe<span style="letter-spacing:-0.8px"> (18)</span></div><div class="a" style="left:74px;top:666px;width:5px;height:1px;background:repeating-linear-gradient(90deg,#a0a0a0 0 1px,transparent 1px 2px)"></div><div class="a" style="left:63px;top:660.5px;width:11px;height:11px;border:1px solid #a5a5a5;background:linear-gradient(#fff,#e4e4e4)"></div><div class="a" style="left:65.5px;top:666px;width:6px;height:1.2px;background:#3b52a4"></div><div class="a" style="left:68px;top:663.5px;width:1.2px;height:6px;background:#3b52a4"></div><svg style="left:79px;top:658px" width="17" height="17" viewBox="0 0 17 17"><path d="M0.8 4H5.5" stroke="#c62626" stroke-width="1.1"/><path d="M4 2V16" stroke="#1a44a8" stroke-width="1.6"/><path d="M7 2V16" stroke="#c62626" stroke-width="1.6"/><path d="M9 2.5V11Q9 13.5 11.5 13.5H15V2.5" fill="none" stroke="#111" stroke-width="1.7"/><path d="M0.8 14H9" stroke="#111" stroke-width="1.7"/></svg><div class="tr" style="left:103px;top:655px">Standort des Wärmeerzeugers<span style="letter-spacing:-0.8px"> (52)</span></div><div class="a" style="left:74px;top:689px;width:5px;height:1px;background:repeating-linear-gradient(90deg,#a0a0a0 0 1px,transparent 1px 2px)"></div><div class="a" style="left:63px;top:683.5px;width:11px;height:11px;border:1px solid #a5a5a5;background:linear-gradient(#fff,#e4e4e4)"></div><div class="a" style="left:65.5px;top:689px;width:6px;height:1.2px;background:#3b52a4"></div><div class="a" style="left:68px;top:686.5px;width:1.2px;height:6px;background:#3b52a4"></div><svg style="left:79px;top:681px" width="17" height="17" viewBox="0 0 17 17"><circle cx="8.5" cy="8.5" r="7.2" fill="#fff" stroke="#111" stroke-width="1.4"/><path d="M3 8.5A5.5 5.5 0 0 1 8.5 3" fill="none" stroke="#1a44a8" stroke-width="2.2"/><path d="M8.5 3A5.5 5.5 0 0 1 14 8.5" fill="none" stroke="#c62626" stroke-width="2.2"/><path d="M6.5 13L10.5 6" stroke="#111" stroke-width="1.2"/></svg><div class="tr" style="left:103px;top:678px">Regelung Heizung Pellet<span style="letter-spacing:-0.8px"> (19)</span></div><div class="a" style="left:74px;top:712px;width:5px;height:1px;background:repeating-linear-gradient(90deg,#a0a0a0 0 1px,transparent 1px 2px)"></div><div class="a" style="left:63px;top:706.5px;width:11px;height:11px;border:1px solid #a5a5a5;background:linear-gradient(#fff,#e4e4e4)"></div><div class="a" style="left:65.5px;top:712px;width:6px;height:1.2px;background:#3b52a4"></div><div class="a" style="left:68px;top:709.5px;width:1.2px;height:6px;background:#3b52a4"></div><svg style="left:79px;top:704px" width="17" height="17" viewBox="0 0 17 17"><circle cx="8.5" cy="8.5" r="7.2" fill="#fff" stroke="#111" stroke-width="1.4"/><path d="M3 8.5A5.5 5.5 0 0 1 8.5 3" fill="none" stroke="#1a44a8" stroke-width="2.2"/><path d="M8.5 3A5.5 5.5 0 0 1 14 8.5" fill="none" stroke="#c62626" stroke-width="2.2"/><path d="M6.5 13L10.5 6" stroke="#111" stroke-width="1.2"/></svg><div class="tr" style="left:103px;top:701px">Hydraulischer Abgleich<span style="letter-spacing:-0.8px"> (37)</span></div><div class="a" style="left:74px;top:735px;width:5px;height:1px;background:repeating-linear-gradient(90deg,#a0a0a0 0 1px,transparent 1px 2px)"></div><div class="a" style="left:63px;top:729.5px;width:11px;height:11px;border:1px solid #a5a5a5;background:linear-gradient(#fff,#e4e4e4)"></div><div class="a" style="left:65.5px;top:735px;width:6px;height:1.2px;background:#3b52a4"></div><div class="a" style="left:68px;top:732.5px;width:1.2px;height:6px;background:#3b52a4"></div><svg style="left:79px;top:727px" width="17" height="17" viewBox="0 0 17 17"><circle cx="8.5" cy="8.5" r="7.2" fill="#fff" stroke="#111" stroke-width="1.4"/><path d="M3 8.5A5.5 5.5 0 0 1 8.5 3" fill="none" stroke="#1a44a8" stroke-width="2.2"/><path d="M8.5 3A5.5 5.5 0 0 1 14 8.5" fill="none" stroke="#c62626" stroke-width="2.2"/><path d="M6.5 13L10.5 6" stroke="#111" stroke-width="1.2"/></svg><div class="tr" style="left:103px;top:724px">Regelung Heizung Brennwertgerät<span style="letter-spacing:-0.8px"> (46)</span></div><div class="a" style="left:74px;top:758px;width:5px;height:1px;background:repeating-linear-gradient(90deg,#a0a0a0 0 1px,transparent 1px 2px)"></div><div class="a" style="left:63px;top:752.5px;width:11px;height:11px;border:1px solid #a5a5a5;background:linear-gradient(#fff,#e4e4e4)"></div><div class="a" style="left:65.5px;top:758px;width:6px;height:1.2px;background:#3b52a4"></div><div class="a" style="left:68px;top:755.5px;width:1.2px;height:6px;background:#3b52a4"></div><svg style="left:79px;top:750px" width="17" height="17" viewBox="0 0 17 17"><circle cx="8.5" cy="8.5" r="7.2" fill="#fff" stroke="#111" stroke-width="1.4"/><path d="M3 8.5A5.5 5.5 0 0 1 8.5 3" fill="none" stroke="#1a44a8" stroke-width="2.2"/><path d="M8.5 3A5.5 5.5 0 0 1 14 8.5" fill="none" stroke="#c62626" stroke-width="2.2"/><path d="M6.5 13L10.5 6" stroke="#111" stroke-width="1.2"/></svg><div class="tr" style="left:103px;top:747px">Regelung Heizung Multisplitgeräte<span style="letter-spacing:-0.8px"> (53)</span></div><div class="a" style="left:74px;top:781px;width:5px;height:1px;background:repeating-linear-gradient(90deg,#a0a0a0 0 1px,transparent 1px 2px)"></div><div class="a" style="left:63px;top:775.5px;width:11px;height:11px;border:1px solid #a5a5a5;background:linear-gradient(#fff,#e4e4e4)"></div><div class="a" style="left:65.5px;top:781px;width:6px;height:1.2px;background:#3b52a4"></div><div class="a" style="left:68px;top:778.5px;width:1.2px;height:6px;background:#3b52a4"></div><svg style="left:79px;top:773px" width="17" height="17" viewBox="0 0 17 17"><circle cx="8.5" cy="8.5" r="7.8" fill="#1a5fb0"/><g fill="#fff"><ellipse cx="8.5" cy="4.3" rx="2.3" ry="3.3" transform="rotate(45 8.5 8.5)"/><ellipse cx="8.5" cy="4.3" rx="2.3" ry="3.3" transform="rotate(135 8.5 8.5)"/><ellipse cx="8.5" cy="4.3" rx="2.3" ry="3.3" transform="rotate(225 8.5 8.5)"/><ellipse cx="8.5" cy="4.3" rx="2.3" ry="3.3" transform="rotate(315 8.5 8.5)"/></g><circle cx="8.5" cy="8.5" r="1.2" fill="#1a5fb0"/></svg><div class="tr" style="left:103px;top:770px">Hocheffiziente Lüftungsanlage mit WRG<span style="letter-spacing:-0.8px"> (16)</span></div><div class="a" style="left:74px;top:804px;width:5px;height:1px;background:repeating-linear-gradient(90deg,#a0a0a0 0 1px,transparent 1px 2px)"></div><div class="a" style="left:63px;top:798.5px;width:11px;height:11px;border:1px solid #a5a5a5;background:linear-gradient(#fff,#e4e4e4)"></div><div class="a" style="left:65.5px;top:804px;width:6px;height:1.2px;background:#3b52a4"></div><div class="a" style="left:68px;top:801.5px;width:1.2px;height:6px;background:#3b52a4"></div><svg style="left:79px;top:796px" width="17" height="17" viewBox="0 0 17 17"><path d="M16.5 6V16.5H4Z" fill="#111"/><circle cx="3.8" cy="3.5" r="2.8" fill="#fdd32c"/><path d="M8 1.5L9.5 1M8 4L10 4.3M7 6.5L8.5 7.5" stroke="#fdd32c" stroke-width="0.9"/></svg><div class="tr" style="left:103px;top:793px">Solaranlage mit Heizungsunterstützung<span style="letter-spacing:-0.8px"> (34)</span></div><div class="a" style="left:74px;top:827px;width:5px;height:1px;background:repeating-linear-gradient(90deg,#a0a0a0 0 1px,transparent 1px 2px)"></div><div class="a" style="left:63px;top:821.5px;width:11px;height:11px;border:1px solid #a5a5a5;background:linear-gradient(#fff,#e4e4e4)"></div><div class="a" style="left:65.5px;top:827px;width:6px;height:1.2px;background:#3b52a4"></div><div class="a" style="left:68px;top:824.5px;width:1.2px;height:6px;background:#3b52a4"></div><svg style="left:79px;top:819px" width="17" height="17" viewBox="0 0 17 17"><path d="M2 16V12.5Q2 8.5 6 8.5H16" fill="none" stroke="#b52024" stroke-width="3.2"/><path d="M0.5 16.2H4" stroke="#111" stroke-width="1"/><path d="M6 2.5H15M10.5 2.5V7" stroke="#111" stroke-width="1.8"/></svg><div class="tr" style="left:103px;top:816px">Elektro-Durchlauferhitzer<span style="letter-spacing:-0.8px"> (51)</span></div><div class="a" style="left:74px;top:850px;width:5px;height:1px;background:repeating-linear-gradient(90deg,#a0a0a0 0 1px,transparent 1px 2px)"></div><div class="a" style="left:63px;top:844.5px;width:11px;height:11px;border:1px solid #a5a5a5;background:linear-gradient(#fff,#e4e4e4)"></div><div class="a" style="left:65.5px;top:850px;width:6px;height:1.2px;background:#3b52a4"></div><div class="a" style="left:68px;top:847.5px;width:1.2px;height:6px;background:#3b52a4"></div><svg style="left:79px;top:842px" width="17" height="17" viewBox="0 0 17 17"><rect x="1.5" y="1" width="7" height="15.5" rx="3.5" fill="#c62626" stroke="#111" stroke-width="1"/><path d="M1.5 10.5H8.5V13Q8.5 16.5 5 16.5Q1.5 16.5 1.5 13Z" fill="#1a44a8" stroke="#111" stroke-width="1"/><path d="M8.5 3.5H16" stroke="#c62626" stroke-width="1.3"/><path d="M8.5 14H16" stroke="#1a44a8" stroke-width="1.3"/></svg><div class="tr" style="left:103px;top:839px">TWW-Solarspeicher mittel - (500 l)<span style="letter-spacing:-0.8px"> (22)</span></div><div class="a" style="left:74px;top:873px;width:5px;height:1px;background:repeating-linear-gradient(90deg,#a0a0a0 0 1px,transparent 1px 2px)"></div><div class="a" style="left:63px;top:867.5px;width:11px;height:11px;border:1px solid #a5a5a5;background:linear-gradient(#fff,#e4e4e4)"></div><div class="a" style="left:65.5px;top:873px;width:6px;height:1.2px;background:#3b52a4"></div><div class="a" style="left:68px;top:870.5px;width:1.2px;height:6px;background:#3b52a4"></div><svg style="left:79px;top:865px" width="17" height="17" viewBox="0 0 17 17"><rect x="1.5" y="1" width="7" height="15.5" rx="3.5" fill="#c62626" stroke="#111" stroke-width="1"/><path d="M1.5 10.5H8.5V13Q8.5 16.5 5 16.5Q1.5 16.5 1.5 13Z" fill="#1a44a8" stroke="#111" stroke-width="1"/><path d="M8.5 3.5H16" stroke="#c62626" stroke-width="1.3"/><path d="M8.5 14H16" stroke="#1a44a8" stroke-width="1.3"/></svg><div class="tr" style="left:103px;top:862px">Pufferspeicher - (1000l)<span style="letter-spacing:-0.8px"> (14)</span></div><div class="a" style="left:50px;top:896px;width:5px;height:1px;background:repeating-linear-gradient(90deg,#a0a0a0 0 1px,transparent 1px 2px)"></div><div class="a" style="left:39px;top:890.5px;width:11px;height:11px;border:1px solid #a5a5a5;background:linear-gradient(#fff,#e4e4e4)"></div><div class="a" style="left:41.5px;top:896px;width:6px;height:1.2px;background:#3b52a4"></div><svg style="left:55px;top:888px" width="17" height="17" viewBox="0 0 17 17"><path d="M8.5 3.5Q5 1 1 2V15Q5 14 8.5 16Q12 14 16 15V2Q12 1 8.5 3.5V16" fill="#fff" stroke="#111" stroke-width="1.3"/><path d="M3 5Q5 4.5 7 5.5M3 7.5Q5 7 7 8M3 10Q5 9.5 7 10.5M3 12.5Q5 12 7 13M10 5.5Q12 4.5 14 5M10 8Q12 7 14 7.5M10 10.5Q12 9.5 14 10M10 13Q12 12 14 12.5" stroke="#333" stroke-width="0.8" fill="none"/></svg><div class="tr" style="left:79px;top:885px">sonstige</div><div class="a" style="left:74px;top:919px;width:5px;height:1px;background:repeating-linear-gradient(90deg,#a0a0a0 0 1px,transparent 1px 2px)"></div><div class="a" style="left:63px;top:913.5px;width:11px;height:11px;border:1px solid #a5a5a5;background:linear-gradient(#fff,#e4e4e4)"></div><div class="a" style="left:65.5px;top:919px;width:6px;height:1.2px;background:#3b52a4"></div><div class="a" style="left:68px;top:916.5px;width:1.2px;height:6px;background:#3b52a4"></div><svg style="left:79px;top:911px" width="17" height="17" viewBox="0 0 17 17"><rect x="1.8" y="1.5" width="12.5" height="14.5" fill="#fff" stroke="#111" stroke-width="1.3"/><rect x="5" y="3.5" width="6" height="1.6" fill="#111"/><path d="M4 7H12.5M4 9.3H12.5M4 11.6H12.5M4 13.9H12.5" stroke="#111" stroke-width="1"/><path d="M6 6.5V14.5" stroke="#fff" stroke-width="0.6"/></svg><div class="tr" style="left:103px;top:908px">Einsparung Baunebenkosten für Sanierung in einem Zug<span style="letter-spacing:-0.8px"> (43)</span></div><div class="a" style="left:74px;top:942px;width:5px;height:1px;background:repeating-linear-gradient(90deg,#a0a0a0 0 1px,transparent 1px 2px)"></div><div class="a" style="left:63px;top:936.5px;width:11px;height:11px;border:1px solid #a5a5a5;background:linear-gradient(#fff,#e4e4e4)"></div><div class="a" style="left:65.5px;top:942px;width:6px;height:1.2px;background:#3b52a4"></div><div class="a" style="left:68px;top:939.5px;width:1.2px;height:6px;background:#3b52a4"></div><svg style="left:79px;top:934px" width="17" height="17" viewBox="0 0 17 17"><path d="M0 9L6 4L16 15" fill="none" stroke="#c62626" stroke-width="1.3"/><path d="M4 7L13 15" stroke="#111" stroke-width="1.5"/><path d="M13 1L14 4L17 5L14 6L13 9L12 6L9 5L12 4Z" fill="#fdd32c"/></svg><div class="tr" style="left:103px;top:931px">Photovoltaik-Anlage hinzufügen<span style="letter-spacing:-0.8px"> (54)</span></div><div class="a" style="left:74px;top:965px;width:5px;height:1px;background:repeating-linear-gradient(90deg,#a0a0a0 0 1px,transparent 1px 2px)"></div><div class="a" style="left:63px;top:959.5px;width:11px;height:11px;border:1px solid #a5a5a5;background:linear-gradient(#fff,#e4e4e4)"></div><div class="a" style="left:65.5px;top:965px;width:6px;height:1.2px;background:#3b52a4"></div><div class="a" style="left:68px;top:962.5px;width:1.2px;height:6px;background:#3b52a4"></div><svg style="left:79px;top:957px" width="17" height="17" viewBox="0 0 17 17"><rect x="1.8" y="1.5" width="12.5" height="14.5" fill="#fff" stroke="#111" stroke-width="1.3"/><rect x="5" y="3.5" width="6" height="1.6" fill="#111"/><path d="M4 7H12.5M4 9.3H12.5M4 11.6H12.5M4 13.9H12.5" stroke="#111" stroke-width="1"/><path d="M6 6.5V14.5" stroke="#fff" stroke-width="0.6"/></svg><div class="tr" style="left:103px;top:954px">Baubegleitung Dachausbau<span style="letter-spacing:-0.8px"> (36)</span></div><div class="a" style="left:74px;top:988px;width:5px;height:1px;background:repeating-linear-gradient(90deg,#a0a0a0 0 1px,transparent 1px 2px)"></div><div class="a" style="left:63px;top:982.5px;width:11px;height:11px;border:1px solid #a5a5a5;background:linear-gradient(#fff,#e4e4e4)"></div><div class="a" style="left:65.5px;top:988px;width:6px;height:1.2px;background:#3b52a4"></div><div class="a" style="left:68px;top:985.5px;width:1.2px;height:6px;background:#3b52a4"></div><svg style="left:79px;top:980px" width="17" height="17" viewBox="0 0 17 17"><rect x="1.8" y="1.5" width="12.5" height="14.5" fill="#fff" stroke="#111" stroke-width="1.3"/><rect x="5" y="3.5" width="6" height="1.6" fill="#111"/><path d="M4 7H12.5M4 9.3H12.5M4 11.6H12.5M4 13.9H12.5" stroke="#111" stroke-width="1"/><path d="M6 6.5V14.5" stroke="#fff" stroke-width="0.6"/></svg><div class="tr" style="left:103px;top:977px">Baubegleitung Wärmedämmung, Fenster, Lüftung<span style="letter-spacing:-0.8px"> (39)</span></div><div class="a" style="left:74px;top:1011px;width:5px;height:1px;background:repeating-linear-gradient(90deg,#a0a0a0 0 1px,transparent 1px 2px)"></div><div class="a" style="left:63px;top:1005.5px;width:11px;height:11px;border:1px solid #a5a5a5;background:linear-gradient(#fff,#e4e4e4)"></div><div class="a" style="left:65.5px;top:1011px;width:6px;height:1.2px;background:#3b52a4"></div><div class="a" style="left:68px;top:1008.5px;width:1.2px;height:6px;background:#3b52a4"></div><svg style="left:79px;top:1003px" width="17" height="17" viewBox="0 0 17 17"><rect x="1.8" y="1.5" width="12.5" height="14.5" fill="#fff" stroke="#111" stroke-width="1.3"/><rect x="5" y="3.5" width="6" height="1.6" fill="#111"/><path d="M4 7H12.5M4 9.3H12.5M4 11.6H12.5M4 13.9H12.5" stroke="#111" stroke-width="1"/><path d="M6 6.5V14.5" stroke="#fff" stroke-width="0.6"/></svg><div class="tr" style="left:103px;top:1000px">Baubegleitung Heizung und Solaranlage<span style="letter-spacing:-0.8px"> (42)</span></div></div></div><div class="a" style="left:0;top:1049px;width:416px;height:1px;background:#8a8a8a"></div><div class="hdr" style="top:1050px;height:23px"></div><div class="a" style="left:4px;top:1076px;width:407px;height:1px;background:#a8a8a8"></div><div class="hdr" style="top:1078px;height:23px"></div><div class="a" style="left:4px;top:1104px;width:407px;height:1px;background:#a8a8a8"></div><div class="a" style="left:0;top:1107px;width:417px;height:2px;background:#8c8a92"></div><svg style="left:8px;top:1057px" width="11" height="10"><path d="M1 1L5.5 5L1 9M5.5 1L10 5L5.5 9" fill="none" stroke="#000" stroke-width="1.8"/></svg><div class="t" style="left:31px;top:1054px;font-size:15px">Beratung</div><svg style="left:8px;top:1085px" width="11" height="10"><path d="M1 1L5.5 5L1 9M5.5 1L10 5L5.5 9" fill="none" stroke="#000" stroke-width="1.8"/></svg><div class="t" style="left:31px;top:1082px;font-size:15px">Ergebnisse, Grafiken, Berichte</div><div class="a" style="left:420px;top:106px;width:45px;height:45px;background:#abd333"></div><svg style="left:428px;top:112px" width="32" height="32" viewBox="0 0 32 32"><rect x="2.9" y="8.5" width="11.5" height="3.3" fill="#0b3f94"/><path d="M14.4 5.1L19.3 10.2L14.4 15.7Z" fill="#0b3f94"/><rect x="21.6" y="8.7" width="3.4" height="3.1" fill="#c62026"/><rect x="25.2" y="1.2" width="3.8" height="3.7" fill="#000"/><rect x="25.2" y="16.1" width="3.8" height="3.6" fill="#000"/><rect x="25.2" y="23.8" width="3.8" height="3.2" fill="#000"/><rect x="3.1" y="20.2" width="10.8" height="2.9" fill="#c62026"/><rect x="6.9" y="16.1" width="3.2" height="10.9" fill="#c62026"/></svg><div class="a" style="left:465px;top:106px;width:1234px;height:45px;background:#676767"></div><div class="t" style="left:1015px;top:121px;font-size:15.2px;font-weight:bold;color:#fff">Maßnahmen</div><div class="t" style="left:422px;top:161px;font-size:15px">Volltextsuche</div><div class="a" style="left:514px;top:156px;width:1180px;height:27px;background:#fff;border:1px solid #ececec;border-bottom:1px solid #858585"></div><div class="a" style="left:424px;top:191px;width:1271px;height:914px;background:#fff"></div><div class="t" style="right:1475px;top:197.5px;font-size:15px;color:#4a4a4a;letter-spacing:-0.35px">ID</div><div class="t" style="left:507.5px;top:197.5px;font-size:15px;color:#4a4a4a;letter-spacing:-0.35px">Name</div><div class="t" style="left:823.5px;top:197.5px;font-size:15px;color:#4a4a4a;letter-spacing:-0.35px">Art</div><div class="t" style="right:996.5px;top:197.5px;font-size:15px;color:#4a4a4a;letter-spacing:-0.35px">Kosten</div><div class="t" style="left:989px;top:197.5px;font-size:15px;color:#4a4a4a;letter-spacing:-0.35px">einm. Kos…</div><div class="t" style="right:835px;top:197.5px;font-size:15px;color:#4a4a4a;letter-spacing:-0.35px">Nutzung</div><div class="t" style="right:754px;top:197.5px;font-size:15px;color:#4a4a4a;letter-spacing:-0.35px">Wartungsk.</div><div class="t" style="right:673.5px;top:197.5px;font-size:15px;color:#4a4a4a;letter-spacing:-0.35px">angew. auf</div><div class="t" style="right:592px;top:197.5px;font-size:15px;color:#4a4a4a;letter-spacing:-0.35px">Invest.v.</div><div class="t" style="right:511px;top:197.5px;font-size:15px;color:#4a4a4a;letter-spacing:-0.35px">verw.Var.</div><div class="row" style="top:217px"><div class="a" style="left:0px;top:0;width:80px;height:25px;background:#fffde2"></div><div class="a" style="left:81px;top:0;width:315px;height:25px;background:#9cd0fe"></div><div class="a" style="left:397px;top:0;width:80px;height:25px;background:#9cd0fe"></div><div class="a" style="left:478px;top:0;width:80px;height:25px;background:#9cd0fe"></div><div class="a" style="left:559px;top:0;width:80px;height:25px;background:#9cd0fe"></div><div class="a" style="left:640px;top:0;width:80px;height:25px;background:#9cd0fe"></div><div class="a" style="left:721px;top:0;width:80px;height:25px;background:#9cd0fe"></div><div class="a" style="left:802px;top:0;width:80px;height:25px;background:#9cd0fe"></div><div class="a" style="left:883px;top:0;width:80px;height:25px;background:#9cd0fe"></div><div class="a" style="left:964px;top:0;width:80px;height:25px;background:#9cd0fe"></div><div class="a" style="left:0;top:25px;width:80px;height:1px;background:#7d7d7d"></div><div class="a" style="left:81px;top:25px;width:964px;height:1px;background:#ededed"></div><div class="c r" style="left:-0.5px;width:78px;letter-spacing:-0.9px;padding-right:0">1<span style="letter-spacing:0">​</span></div><div class="c" style="letter-spacing:0.00px;left:83.5px;width:294px">Kellerdecke, unterseitig dämmen</div><div class="ic" style="left:378px;background:#a3cd39"><svg style="left:2px;top:1.5px" width="12" height="13"><path d="M1 13.2L6 1L11 13.2M2.7 9H9.3" fill="none" stroke="#fff" stroke-width="2"/></svg></div><div class="c" style="left:399.5px;width:77px">Dämmung</div><div class="c r" style="left:479.5px;width:58px;letter-spacing:-0.9px;padding-right:0">100<span style="letter-spacing:0">​</span></div><div class="ic" style="left:540px;background:#063a8f"><svg style="left:0;top:0" width="16" height="16"><path d="M2.3 10.3L10 2.6L13.2 5.8L5.5 13.5Z" fill="#fff"/><path d="M10.8 1.8L11.8 0.8L15 4L14 5Z" fill="#fff"/><path d="M1.8 11L4.8 14L1 15Z" fill="#fff"/></svg></div><div class="c r" style="left:558.5px;width:78px;letter-spacing:-0.9px;padding-right:0">0<span style="letter-spacing:0">​</span></div><div class="c r" style="left:639.5px;width:78px;letter-spacing:-0.9px;padding-right:0">35<span style="letter-spacing:0">​</span></div><div class="c r" style="left:722.5px;width:58px;letter-spacing:-0.9px;padding-right:0">0<span style="letter-spacing:0">​</span></div><div class="ic" style="left:783px;background:#a3cd39"><svg style="left:2px;top:1.5px" width="12" height="13"><path d="M1 13.2L6 1L11 13.2M2.7 9H9.3" fill="none" stroke="#fff" stroke-width="2"/></svg></div><div class="c r" style="left:801.5px;width:78px;letter-spacing:-0.9px;padding-right:0">16;<span style="letter-spacing:0">​</span></div><div class="c r" style="left:882.5px;width:78px;letter-spacing:-0.9px;padding-right:0">14404<span style="letter-spacing:0">​</span></div><div class="c r" style="left:963.5px;width:78px;letter-spacing:-0.9px;padding-right:0">1;5;6;<span style="letter-spacing:0">​</span></div></div><div class="row" style="top:243px"><div class="a" style="left:0px;top:0;width:80px;height:25px;background:#fff"></div><div class="a" style="left:81px;top:0;width:315px;height:25px;background:#fff"></div><div class="a" style="left:397px;top:0;width:80px;height:25px;background:#fff"></div><div class="a" style="left:478px;top:0;width:80px;height:25px;background:#fff"></div><div class="a" style="left:559px;top:0;width:80px;height:25px;background:#fff"></div><div class="a" style="left:640px;top:0;width:80px;height:25px;background:#fff"></div><div class="a" style="left:721px;top:0;width:80px;height:25px;background:#fff"></div><div class="a" style="left:802px;top:0;width:80px;height:25px;background:#fff"></div><div class="a" style="left:883px;top:0;width:80px;height:25px;background:#fff"></div><div class="a" style="left:964px;top:0;width:80px;height:25px;background:#fff"></div><div class="a" style="left:0;top:25px;width:80px;height:1px;background:#7d7d7d"></div><div class="a" style="left:81px;top:25px;width:964px;height:1px;background:#ededed"></div><div class="c r" style="left:-0.5px;width:78px;letter-spacing:-0.9px;padding-right:0">5<span style="letter-spacing:0">​</span></div><div class="c" style="letter-spacing:-0.32px;left:83.5px;width:294px">Außendämmung, Wärmedämmverbundsys…</div><div class="ic" style="left:378px;background:#a3cd39"><svg style="left:2px;top:1.5px" width="12" height="13"><path d="M1 13.2L6 1L11 13.2M2.7 9H9.3" fill="none" stroke="#fff" stroke-width="2"/></svg></div><div class="c" style="left:399.5px;width:77px">Dämmung</div><div class="c r" style="left:479.5px;width:58px;letter-spacing:-0.9px;padding-right:0">250<span style="letter-spacing:0">​</span></div><div class="ic" style="left:540px;background:#063a8f"><svg style="left:0;top:0" width="16" height="16"><path d="M2.3 10.3L10 2.6L13.2 5.8L5.5 13.5Z" fill="#fff"/><path d="M10.8 1.8L11.8 0.8L15 4L14 5Z" fill="#fff"/><path d="M1.8 11L4.8 14L1 15Z" fill="#fff"/></svg></div><div class="c r" style="left:558.5px;width:78px;letter-spacing:-0.9px;padding-right:0">0<span style="letter-spacing:0">​</span></div><div class="c r" style="left:639.5px;width:78px;letter-spacing:-0.9px;padding-right:0">40<span style="letter-spacing:0">​</span></div><div class="c r" style="left:722.5px;width:58px;letter-spacing:-0.9px;padding-right:0">0<span style="letter-spacing:0">​</span></div><div class="ic" style="left:783px;background:#a3cd39"><svg style="left:2px;top:1.5px" width="12" height="13"><path d="M1 13.2L6 1L11 13.2M2.7 9H9.3" fill="none" stroke="#fff" stroke-width="2"/></svg></div><div class="c r" style="left:801.5px;width:78px;letter-spacing:-0.9px;padding-right:0">5;8;10;12;<span style="letter-spacing:0">​</span></div><div class="c r" style="left:882.5px;width:78px;letter-spacing:-0.9px;padding-right:0">73379<span style="letter-spacing:0">​</span></div><div class="c r" style="left:963.5px;width:78px;letter-spacing:-0.9px;padding-right:0">1;5;6;<span style="letter-spacing:0">​</span></div></div><div class="row" style="top:269px"><div class="a" style="left:0px;top:0;width:80px;height:25px;background:#fffde2"></div><div class="a" style="left:81px;top:0;width:315px;height:25px;background:#fffde2"></div><div class="a" style="left:397px;top:0;width:80px;height:25px;background:#fffde2"></div><div class="a" style="left:478px;top:0;width:80px;height:25px;background:#fffde2"></div><div class="a" style="left:559px;top:0;width:80px;height:25px;background:#fffde2"></div><div class="a" style="left:640px;top:0;width:80px;height:25px;background:#fffde2"></div><div class="a" style="left:721px;top:0;width:80px;height:25px;background:#fffde2"></div><div class="a" style="left:802px;top:0;width:80px;height:25px;background:#fffde2"></div><div class="a" style="left:883px;top:0;width:80px;height:25px;background:#fffde2"></div><div class="a" style="left:964px;top:0;width:80px;height:25px;background:#fffde2"></div><div class="a" style="left:0;top:25px;width:80px;height:1px;background:#7d7d7d"></div><div class="a" style="left:81px;top:25px;width:964px;height:1px;background:#ededed"></div><div class="c r" style="left:-0.5px;width:78px;letter-spacing:-0.9px;padding-right:0">7<span style="letter-spacing:0">​</span></div><div class="c" style="letter-spacing:0.00px;left:83.5px;width:294px">Kellerinnenwand dämmen</div><div class="ic" style="left:378px;background:#a3cd39"><svg style="left:2px;top:1.5px" width="12" height="13"><path d="M1 13.2L6 1L11 13.2M2.7 9H9.3" fill="none" stroke="#fff" stroke-width="2"/></svg></div><div class="c" style="left:399.5px;width:77px">Dämmung</div><div class="c r" style="left:479.5px;width:58px;letter-spacing:-0.9px;padding-right:0">100<span style="letter-spacing:0">​</span></div><div class="ic" style="left:540px;background:#063a8f"><svg style="left:0;top:0" width="16" height="16"><path d="M2.3 10.3L10 2.6L13.2 5.8L5.5 13.5Z" fill="#fff"/><path d="M10.8 1.8L11.8 0.8L15 4L14 5Z" fill="#fff"/><path d="M1.8 11L4.8 14L1 15Z" fill="#fff"/></svg></div><div class="c r" style="left:558.5px;width:78px;letter-spacing:-0.9px;padding-right:0">0<span style="letter-spacing:0">​</span></div><div class="c r" style="left:639.5px;width:78px;letter-spacing:-0.9px;padding-right:0">40<span style="letter-spacing:0">​</span></div><div class="c r" style="left:722.5px;width:58px;letter-spacing:-0.9px;padding-right:0">0<span style="letter-spacing:0">​</span></div><div class="ic" style="left:783px;background:#a3cd39"><svg style="left:2px;top:1.5px" width="12" height="13"><path d="M1 13.2L6 1L11 13.2M2.7 9H9.3" fill="none" stroke="#fff" stroke-width="2"/></svg></div><div class="c r" style="left:801.5px;width:78px;letter-spacing:-0.9px;padding-right:0">4;<span style="letter-spacing:0">​</span></div><div class="c r" style="left:882.5px;width:78px;letter-spacing:-0.9px;padding-right:0">1834<span style="letter-spacing:0">​</span></div><div class="c r" style="left:963.5px;width:78px;letter-spacing:-0.9px;padding-right:0">1;5;6;<span style="letter-spacing:0">​</span></div></div><div class="row" style="top:295px"><div class="a" style="left:0px;top:0;width:80px;height:25px;background:#fff"></div><div class="a" style="left:81px;top:0;width:315px;height:25px;background:#fff"></div><div class="a" style="left:397px;top:0;width:80px;height:25px;background:#fff"></div><div class="a" style="left:478px;top:0;width:80px;height:25px;background:#fff"></div><div class="a" style="left:559px;top:0;width:80px;height:25px;background:#fff"></div><div class="a" style="left:640px;top:0;width:80px;height:25px;background:#fff"></div><div class="a" style="left:721px;top:0;width:80px;height:25px;background:#fff"></div><div class="a" style="left:802px;top:0;width:80px;height:25px;background:#fff"></div><div class="a" style="left:883px;top:0;width:80px;height:25px;background:#fff"></div><div class="a" style="left:964px;top:0;width:80px;height:25px;background:#fff"></div><div class="a" style="left:0;top:25px;width:80px;height:1px;background:#7d7d7d"></div><div class="a" style="left:81px;top:25px;width:964px;height:1px;background:#ededed"></div><div class="c r" style="left:-0.5px;width:78px;letter-spacing:-0.9px;padding-right:0">8<span style="letter-spacing:0">​</span></div><div class="c" style="letter-spacing:0.00px;left:83.5px;width:294px">Neuaufbau von: Dachschräge S</div><div class="ic" style="left:378px;background:#a3cd39"><svg style="left:2px;top:1.5px" width="12" height="13"><path d="M1 13.2L6 1L11 13.2M2.7 9H9.3" fill="none" stroke="#fff" stroke-width="2"/></svg></div><div class="c" style="letter-spacing:-0.7px;left:399.5px;width:77px">Konstrukti…</div><div class="c r" style="left:479.5px;width:58px;letter-spacing:-0.9px;padding-right:0">200<span style="letter-spacing:0">​</span></div><div class="ic" style="left:540px;background:#063a8f"><svg style="left:0;top:0" width="16" height="16"><path d="M2.3 10.3L10 2.6L13.2 5.8L5.5 13.5Z" fill="#fff"/><path d="M10.8 1.8L11.8 0.8L15 4L14 5Z" fill="#fff"/><path d="M1.8 11L4.8 14L1 15Z" fill="#fff"/></svg></div><div class="c r" style="left:558.5px;width:78px;letter-spacing:-0.9px;padding-right:0">0<span style="letter-spacing:0">​</span></div><div class="c r" style="left:639.5px;width:78px;letter-spacing:-0.9px;padding-right:0">40<span style="letter-spacing:0">​</span></div><div class="c r" style="left:722.5px;width:58px;letter-spacing:-0.9px;padding-right:0">0<span style="letter-spacing:0">​</span></div><div class="ic" style="left:783px;background:#a3cd39"><svg style="left:2px;top:1.5px" width="12" height="13"><path d="M1 13.2L6 1L11 13.2M2.7 9H9.3" fill="none" stroke="#fff" stroke-width="2"/></svg></div><div class="c r" style="left:801.5px;width:78px;letter-spacing:-0.9px;padding-right:0">2;<span style="letter-spacing:0">​</span></div><div class="c r" style="left:882.5px;width:78px;letter-spacing:-0.9px;padding-right:0">18118<span style="letter-spacing:0">​</span></div><div class="c r" style="left:963.5px;width:78px;letter-spacing:-0.9px;padding-right:0">2;5;6;<span style="letter-spacing:0">​</span></div></div><div class="row" style="top:321px"><div class="a" style="left:0px;top:0;width:80px;height:25px;background:#fffde2"></div><div class="a" style="left:81px;top:0;width:315px;height:25px;background:#fffde2"></div><div class="a" style="left:397px;top:0;width:80px;height:25px;background:#fffde2"></div><div class="a" style="left:478px;top:0;width:80px;height:25px;background:#fffde2"></div><div class="a" style="left:559px;top:0;width:80px;height:25px;background:#fffde2"></div><div class="a" style="left:640px;top:0;width:80px;height:25px;background:#fffde2"></div><div class="a" style="left:721px;top:0;width:80px;height:25px;background:#fffde2"></div><div class="a" style="left:802px;top:0;width:80px;height:25px;background:#fffde2"></div><div class="a" style="left:883px;top:0;width:80px;height:25px;background:#fffde2"></div><div class="a" style="left:964px;top:0;width:80px;height:25px;background:#fffde2"></div><div class="a" style="left:0;top:25px;width:80px;height:1px;background:#7d7d7d"></div><div class="a" style="left:81px;top:25px;width:964px;height:1px;background:#ededed"></div><div class="c r" style="left:-0.5px;width:78px;letter-spacing:-0.9px;padding-right:0">9<span style="letter-spacing:0">​</span></div><div class="c" style="letter-spacing:0.00px;left:83.5px;width:294px">Neuaufbau von: Dachschräge N</div><div class="ic" style="left:378px;background:#a3cd39"><svg style="left:2px;top:1.5px" width="12" height="13"><path d="M1 13.2L6 1L11 13.2M2.7 9H9.3" fill="none" stroke="#fff" stroke-width="2"/></svg></div><div class="c" style="letter-spacing:-0.7px;left:399.5px;width:77px">Konstrukti…</div><div class="c r" style="left:479.5px;width:58px;letter-spacing:-0.9px;padding-right:0">200<span style="letter-spacing:0">​</span></div><div class="ic" style="left:540px;background:#063a8f"><svg style="left:0;top:0" width="16" height="16"><path d="M2.3 10.3L10 2.6L13.2 5.8L5.5 13.5Z" fill="#fff"/><path d="M10.8 1.8L11.8 0.8L15 4L14 5Z" fill="#fff"/><path d="M1.8 11L4.8 14L1 15Z" fill="#fff"/></svg></div><div class="c r" style="left:558.5px;width:78px;letter-spacing:-0.9px;padding-right:0">0<span style="letter-spacing:0">​</span></div><div class="c r" style="left:639.5px;width:78px;letter-spacing:-0.9px;padding-right:0">40<span style="letter-spacing:0">​</span></div><div class="c r" style="left:722.5px;width:58px;letter-spacing:-0.9px;padding-right:0">0<span style="letter-spacing:0">​</span></div><div class="ic" style="left:783px;background:#a3cd39"><svg style="left:2px;top:1.5px" width="12" height="13"><path d="M1 13.2L6 1L11 13.2M2.7 9H9.3" fill="none" stroke="#fff" stroke-width="2"/></svg></div><div class="c r" style="left:801.5px;width:78px;letter-spacing:-0.9px;padding-right:0">6;<span style="letter-spacing:0">​</span></div><div class="c r" style="left:882.5px;width:78px;letter-spacing:-0.9px;padding-right:0">7725<span style="letter-spacing:0">​</span></div><div class="c r" style="left:963.5px;width:78px;letter-spacing:-0.9px;padding-right:0">2;5;6;<span style="letter-spacing:0">​</span></div></div><div class="row" style="top:347px"><div class="a" style="left:0px;top:0;width:80px;height:25px;background:#fff"></div><div class="a" style="left:81px;top:0;width:315px;height:25px;background:#fff"></div><div class="a" style="left:397px;top:0;width:80px;height:25px;background:#fff"></div><div class="a" style="left:478px;top:0;width:80px;height:25px;background:#fff"></div><div class="a" style="left:559px;top:0;width:80px;height:25px;background:#fff"></div><div class="a" style="left:640px;top:0;width:80px;height:25px;background:#fff"></div><div class="a" style="left:721px;top:0;width:80px;height:25px;background:#fff"></div><div class="a" style="left:802px;top:0;width:80px;height:25px;background:#fff"></div><div class="a" style="left:883px;top:0;width:80px;height:25px;background:#fff"></div><div class="a" style="left:964px;top:0;width:80px;height:25px;background:#fff"></div><div class="a" style="left:0;top:25px;width:80px;height:1px;background:#7d7d7d"></div><div class="a" style="left:81px;top:25px;width:964px;height:1px;background:#ededed"></div><div class="c r" style="left:-0.5px;width:78px;letter-spacing:-0.9px;padding-right:0">6<span style="letter-spacing:0">​</span></div><div class="c" style="letter-spacing:0.00px;left:83.5px;width:294px">Fensteraustausch, Passivhausqualität</div><div class="ic" style="left:378px;background:#a3cd39"><svg style="left:2px;top:1.5px" width="12" height="13"><path d="M1 13.2L6 1L11 13.2M2.7 9H9.3" fill="none" stroke="#fff" stroke-width="2"/></svg></div><div class="c" style="left:399.5px;width:77px">Fenster</div><div class="c r" style="left:479.5px;width:58px;letter-spacing:-0.9px;padding-right:0">800<span style="letter-spacing:0">​</span></div><div class="ic" style="left:540px;background:#063a8f"><svg style="left:0;top:0" width="16" height="16"><path d="M2.3 10.3L10 2.6L13.2 5.8L5.5 13.5Z" fill="#fff"/><path d="M10.8 1.8L11.8 0.8L15 4L14 5Z" fill="#fff"/><path d="M1.8 11L4.8 14L1 15Z" fill="#fff"/></svg></div><div class="c r" style="left:558.5px;width:78px;letter-spacing:-0.9px;padding-right:0">0<span style="letter-spacing:0">​</span></div><div class="c r" style="left:639.5px;width:78px;letter-spacing:-0.9px;padding-right:0">25<span style="letter-spacing:0">​</span></div><div class="c r" style="left:722.5px;width:58px;letter-spacing:-0.9px;padding-right:0">0<span style="letter-spacing:0">​</span></div><div class="ic" style="left:783px;background:#a3cd39"><svg style="left:2px;top:1.5px" width="12" height="13"><path d="M1 13.2L6 1L11 13.2M2.7 9H9.3" fill="none" stroke="#fff" stroke-width="2"/></svg></div><div class="c r" style="left:801.5px;width:78px;letter-spacing:-0.9px;padding-right:0">9;11;13;15…<span style="letter-spacing:0">​</span></div><div class="c r" style="left:882.5px;width:78px;letter-spacing:-0.9px;padding-right:0">63393<span style="letter-spacing:0">​</span></div><div class="c r" style="left:963.5px;width:78px;letter-spacing:-0.9px;padding-right:0">1;5;<span style="letter-spacing:0">​</span></div></div><div class="row" style="top:373px"><div class="a" style="left:0px;top:0;width:80px;height:25px;background:#fffde2"></div><div class="a" style="left:81px;top:0;width:315px;height:25px;background:#fffde2"></div><div class="a" style="left:397px;top:0;width:80px;height:25px;background:#fffde2"></div><div class="a" style="left:478px;top:0;width:80px;height:25px;background:#fffde2"></div><div class="a" style="left:559px;top:0;width:80px;height:25px;background:#fffde2"></div><div class="a" style="left:640px;top:0;width:80px;height:25px;background:#fffde2"></div><div class="a" style="left:721px;top:0;width:80px;height:25px;background:#fffde2"></div><div class="a" style="left:802px;top:0;width:80px;height:25px;background:#fffde2"></div><div class="a" style="left:883px;top:0;width:80px;height:25px;background:#fffde2"></div><div class="a" style="left:964px;top:0;width:80px;height:25px;background:#fffde2"></div><div class="a" style="left:0;top:25px;width:80px;height:1px;background:#7d7d7d"></div><div class="a" style="left:81px;top:25px;width:964px;height:1px;background:#ededed"></div><div class="c r" style="left:-0.5px;width:78px;letter-spacing:-0.9px;padding-right:0">38<span style="letter-spacing:0">​</span></div><div class="c" style="letter-spacing:0.00px;left:83.5px;width:294px">Dachflächenfenster erneuern</div><div class="ic" style="left:378px;background:#a3cd39"><svg style="left:2px;top:1.5px" width="12" height="13"><path d="M1 13.2L6 1L11 13.2M2.7 9H9.3" fill="none" stroke="#fff" stroke-width="2"/></svg></div><div class="c" style="left:399.5px;width:77px">Fenster</div><div class="c r" style="left:479.5px;width:58px;letter-spacing:-0.9px;padding-right:0">800<span style="letter-spacing:0">​</span></div><div class="ic" style="left:540px;background:#063a8f"><svg style="left:0;top:0" width="16" height="16"><path d="M2.3 10.3L10 2.6L13.2 5.8L5.5 13.5Z" fill="#fff"/><path d="M10.8 1.8L11.8 0.8L15 4L14 5Z" fill="#fff"/><path d="M1.8 11L4.8 14L1 15Z" fill="#fff"/></svg></div><div class="c r" style="left:558.5px;width:78px;letter-spacing:-0.9px;padding-right:0">0<span style="letter-spacing:0">​</span></div><div class="c r" style="left:639.5px;width:78px;letter-spacing:-0.9px;padding-right:0">25<span style="letter-spacing:0">​</span></div><div class="c r" style="left:722.5px;width:58px;letter-spacing:-0.9px;padding-right:0">0<span style="letter-spacing:0">​</span></div><div class="ic" style="left:783px;background:#a3cd39"><svg style="left:2px;top:1.5px" width="12" height="13"><path d="M1 13.2L6 1L11 13.2M2.7 9H9.3" fill="none" stroke="#fff" stroke-width="2"/></svg></div><div class="c r" style="left:801.5px;width:78px;letter-spacing:-0.9px;padding-right:0">3;7;<span style="letter-spacing:0">​</span></div><div class="c r" style="left:882.5px;width:78px;letter-spacing:-0.9px;padding-right:0">6477<span style="letter-spacing:0">​</span></div><div class="c r" style="left:963.5px;width:78px;letter-spacing:-0.9px;padding-right:0">2;5;6;<span style="letter-spacing:0">​</span></div></div><div class="row" style="top:399px"><div class="a" style="left:0px;top:0;width:80px;height:25px;background:#fff"></div><div class="a" style="left:81px;top:0;width:315px;height:25px;background:#fff"></div><div class="a" style="left:397px;top:0;width:80px;height:25px;background:#fff"></div><div class="a" style="left:478px;top:0;width:80px;height:25px;background:#fff"></div><div class="a" style="left:559px;top:0;width:80px;height:25px;background:#fff"></div><div class="a" style="left:640px;top:0;width:80px;height:25px;background:#fff"></div><div class="a" style="left:721px;top:0;width:80px;height:25px;background:#fff"></div><div class="a" style="left:802px;top:0;width:80px;height:25px;background:#fff"></div><div class="a" style="left:883px;top:0;width:80px;height:25px;background:#fff"></div><div class="a" style="left:964px;top:0;width:80px;height:25px;background:#fff"></div><div class="a" style="left:0;top:25px;width:80px;height:1px;background:#7d7d7d"></div><div class="a" style="left:81px;top:25px;width:964px;height:1px;background:#ededed"></div><div class="c r" style="left:-0.5px;width:78px;letter-spacing:-0.9px;padding-right:0">45<span style="letter-spacing:0">​</span></div><div class="c" style="letter-spacing:0.00px;left:83.5px;width:294px">Haustür erneuern</div><div class="ic" style="left:378px;background:#063a8f"><svg style="left:0;top:0" width="16" height="16"><path d="M2.3 10.3L10 2.6L13.2 5.8L5.5 13.5Z" fill="#fff"/><path d="M10.8 1.8L11.8 0.8L15 4L14 5Z" fill="#fff"/><path d="M1.8 11L4.8 14L1 15Z" fill="#fff"/></svg></div><div class="c" style="left:399.5px;width:77px">Fenster</div><div class="c r" style="left:479.5px;width:58px;letter-spacing:-0.9px;padding-right:0">1100<span style="letter-spacing:0">​</span></div><div class="ic" style="left:540px;background:#063a8f"><svg style="left:0;top:0" width="16" height="16"><path d="M2.3 10.3L10 2.6L13.2 5.8L5.5 13.5Z" fill="#fff"/><path d="M10.8 1.8L11.8 0.8L15 4L14 5Z" fill="#fff"/><path d="M1.8 11L4.8 14L1 15Z" fill="#fff"/></svg></div><div class="c r" style="left:558.5px;width:78px;letter-spacing:-0.9px;padding-right:0">0<span style="letter-spacing:0">​</span></div><div class="c r" style="left:639.5px;width:78px;letter-spacing:-0.9px;padding-right:0">40<span style="letter-spacing:0">​</span></div><div class="c r" style="left:722.5px;width:58px;letter-spacing:-0.9px;padding-right:0">0<span style="letter-spacing:0">​</span></div><div class="ic" style="left:783px;background:#a3cd39"><svg style="left:2px;top:1.5px" width="12" height="13"><path d="M1 13.2L6 1L11 13.2M2.7 9H9.3" fill="none" stroke="#fff" stroke-width="2"/></svg></div><div class="c r" style="left:801.5px;width:78px;letter-spacing:-0.9px;padding-right:0">17;<span style="letter-spacing:0">​</span></div><div class="c r" style="left:882.5px;width:78px;letter-spacing:-0.9px;padding-right:0">2814<span style="letter-spacing:0">​</span></div><div class="c r" style="left:963.5px;width:78px;letter-spacing:-0.9px;padding-right:0">1;5;6;<span style="letter-spacing:0">​</span></div></div><div class="row" style="top:425px"><div class="a" style="left:0px;top:0;width:80px;height:25px;background:#fffde2"></div><div class="a" style="left:81px;top:0;width:315px;height:25px;background:#fffde2"></div><div class="a" style="left:397px;top:0;width:80px;height:25px;background:#fffde2"></div><div class="a" style="left:478px;top:0;width:80px;height:25px;background:#fffde2"></div><div class="a" style="left:559px;top:0;width:80px;height:25px;background:#fffde2"></div><div class="a" style="left:640px;top:0;width:80px;height:25px;background:#fffde2"></div><div class="a" style="left:721px;top:0;width:80px;height:25px;background:#fffde2"></div><div class="a" style="left:802px;top:0;width:80px;height:25px;background:#fffde2"></div><div class="a" style="left:883px;top:0;width:80px;height:25px;background:#fffde2"></div><div class="a" style="left:964px;top:0;width:80px;height:25px;background:#fffde2"></div><div class="a" style="left:0;top:25px;width:80px;height:1px;background:#7d7d7d"></div><div class="a" style="left:81px;top:25px;width:964px;height:1px;background:#ededed"></div><div class="c r" style="left:-0.5px;width:78px;letter-spacing:-0.9px;padding-right:0">49<span style="letter-spacing:0">​</span></div><div class="c" style="letter-spacing:0.00px;left:83.5px;width:294px">Ertüchtigung der Verglasung</div><div class="ic" style="left:378px;background:#063a8f"><svg style="left:0;top:0" width="16" height="16"><path d="M2.3 10.3L10 2.6L13.2 5.8L5.5 13.5Z" fill="#fff"/><path d="M10.8 1.8L11.8 0.8L15 4L14 5Z" fill="#fff"/><path d="M1.8 11L4.8 14L1 15Z" fill="#fff"/></svg></div><div class="c" style="left:399.5px;width:77px">Fenster</div><div class="c r" style="left:479.5px;width:58px;letter-spacing:-0.9px;padding-right:0">294<span style="letter-spacing:0">​</span></div><div class="ic" style="left:540px;background:#063a8f"><svg style="left:0;top:0" width="16" height="16"><path d="M2.3 10.3L10 2.6L13.2 5.8L5.5 13.5Z" fill="#fff"/><path d="M10.8 1.8L11.8 0.8L15 4L14 5Z" fill="#fff"/><path d="M1.8 11L4.8 14L1 15Z" fill="#fff"/></svg></div><div class="c r" style="left:558.5px;width:78px;letter-spacing:-0.9px;padding-right:0">0<span style="letter-spacing:0">​</span></div><div class="c r" style="left:639.5px;width:78px;letter-spacing:-0.9px;padding-right:0">20<span style="letter-spacing:0">​</span></div><div class="c r" style="left:722.5px;width:58px;letter-spacing:-0.9px;padding-right:0">0<span style="letter-spacing:0">​</span></div><div class="ic" style="left:783px;background:#a3cd39"><svg style="left:2px;top:1.5px" width="12" height="13"><path d="M1 13.2L6 1L11 13.2M2.7 9H9.3" fill="none" stroke="#fff" stroke-width="2"/></svg></div><div class="c r" style="left:801.5px;width:78px;letter-spacing:-0.9px;padding-right:0">9;11;13;15…<span style="letter-spacing:0">​</span></div><div class="c r" style="left:882.5px;width:78px;letter-spacing:-0.9px;padding-right:0">23318<span style="letter-spacing:0">​</span></div><div class="c r" style="left:963.5px;width:78px;letter-spacing:-0.9px;padding-right:0">6;<span style="letter-spacing:0">​</span></div></div><div class="row" style="top:451px"><div class="a" style="left:0px;top:0;width:80px;height:25px;background:#fff"></div><div class="a" style="left:81px;top:0;width:315px;height:25px;background:#fff"></div><div class="a" style="left:397px;top:0;width:80px;height:25px;background:#fff"></div><div class="a" style="left:478px;top:0;width:80px;height:25px;background:#fff"></div><div class="a" style="left:559px;top:0;width:80px;height:25px;background:#fff"></div><div class="a" style="left:640px;top:0;width:80px;height:25px;background:#fff"></div><div class="a" style="left:721px;top:0;width:80px;height:25px;background:#fff"></div><div class="a" style="left:802px;top:0;width:80px;height:25px;background:#fff"></div><div class="a" style="left:883px;top:0;width:80px;height:25px;background:#fff"></div><div class="a" style="left:964px;top:0;width:80px;height:25px;background:#fff"></div><div class="a" style="left:0;top:25px;width:80px;height:1px;background:#7d7d7d"></div><div class="a" style="left:81px;top:25px;width:964px;height:1px;background:#ededed"></div><div class="c r" style="left:-0.5px;width:78px;letter-spacing:-0.9px;padding-right:0">17<span style="letter-spacing:0">​</span></div><div class="c" style="letter-spacing:0.00px;left:83.5px;width:294px">Pelletkessel</div><div class="ic" style="left:378px;background:#a3cd39"><svg style="left:2px;top:1.5px" width="12" height="13"><path d="M1 13.2L6 1L11 13.2M2.7 9H9.3" fill="none" stroke="#fff" stroke-width="2"/></svg></div><div class="c" style="letter-spacing:-0.7px;left:399.5px;width:77px">Wärmeer…</div><div class="c r" style="left:479.5px;width:58px;letter-spacing:-0.9px;padding-right:0">25000<span style="letter-spacing:0">​</span></div><div class="ic" style="left:540px;background:#063a8f"><svg style="left:0;top:0" width="16" height="16"><path d="M2.3 10.3L10 2.6L13.2 5.8L5.5 13.5Z" fill="#fff"/><path d="M10.8 1.8L11.8 0.8L15 4L14 5Z" fill="#fff"/><path d="M1.8 11L4.8 14L1 15Z" fill="#fff"/></svg></div><div class="c r" style="left:558.5px;width:78px;letter-spacing:-0.9px;padding-right:0">3000<span style="letter-spacing:0">​</span></div><div class="c r" style="left:639.5px;width:78px;letter-spacing:-0.9px;padding-right:0">20<span style="letter-spacing:0">​</span></div><div class="c r" style="left:722.5px;width:58px;letter-spacing:-0.9px;padding-right:0">0<span style="letter-spacing:0">​</span></div><div class="ic" style="left:783px;background:#a3cd39"><svg style="left:2px;top:1.5px" width="12" height="13"><path d="M1 13.2L6 1L11 13.2M2.7 9H9.3" fill="none" stroke="#fff" stroke-width="2"/></svg></div><div class="c r" style="left:801.5px;width:78px;letter-spacing:-0.9px;padding-right:0">1;<span style="letter-spacing:0">​</span></div><div class="c r" style="left:882.5px;width:78px;letter-spacing:-0.9px;padding-right:0">28000<span style="letter-spacing:0">​</span></div><div class="c r" style="left:963.5px;width:78px;letter-spacing:-0.9px;padding-right:0">3;5;<span style="letter-spacing:0">​</span></div></div><div class="row" style="top:477px"><div class="a" style="left:0px;top:0;width:80px;height:25px;background:#fffde2"></div><div class="a" style="left:81px;top:0;width:315px;height:25px;background:#fffde2"></div><div class="a" style="left:397px;top:0;width:80px;height:25px;background:#fffde2"></div><div class="a" style="left:478px;top:0;width:80px;height:25px;background:#fffde2"></div><div class="a" style="left:559px;top:0;width:80px;height:25px;background:#fffde2"></div><div class="a" style="left:640px;top:0;width:80px;height:25px;background:#fffde2"></div><div class="a" style="left:721px;top:0;width:80px;height:25px;background:#fffde2"></div><div class="a" style="left:802px;top:0;width:80px;height:25px;background:#fffde2"></div><div class="a" style="left:883px;top:0;width:80px;height:25px;background:#fffde2"></div><div class="a" style="left:964px;top:0;width:80px;height:25px;background:#fffde2"></div><div class="a" style="left:0;top:25px;width:80px;height:1px;background:#7d7d7d"></div><div class="a" style="left:81px;top:25px;width:964px;height:1px;background:#ededed"></div><div class="c r" style="left:-0.5px;width:78px;letter-spacing:-0.9px;padding-right:0">41<span style="letter-spacing:0">​</span></div><div class="c" style="letter-spacing:0.00px;left:83.5px;width:294px">Brennwertheizung Erdgas</div><div class="ic" style="left:378px;background:#a3cd39"><svg style="left:2px;top:1.5px" width="12" height="13"><path d="M1 13.2L6 1L11 13.2M2.7 9H9.3" fill="none" stroke="#fff" stroke-width="2"/></svg></div><div class="c" style="letter-spacing:-0.7px;left:399.5px;width:77px">Wärmeer…</div><div class="c r" style="left:479.5px;width:58px;letter-spacing:-0.9px;padding-right:0">15000<span style="letter-spacing:0">​</span></div><div class="ic" style="left:540px;background:#063a8f"><svg style="left:0;top:0" width="16" height="16"><path d="M2.3 10.3L10 2.6L13.2 5.8L5.5 13.5Z" fill="#fff"/><path d="M10.8 1.8L11.8 0.8L15 4L14 5Z" fill="#fff"/><path d="M1.8 11L4.8 14L1 15Z" fill="#fff"/></svg></div><div class="c r" style="left:558.5px;width:78px;letter-spacing:-0.9px;padding-right:0">1000<span style="letter-spacing:0">​</span></div><div class="c r" style="left:639.5px;width:78px;letter-spacing:-0.9px;padding-right:0">20<span style="letter-spacing:0">​</span></div><div class="c r" style="left:722.5px;width:58px;letter-spacing:-0.9px;padding-right:0">0<span style="letter-spacing:0">​</span></div><div class="ic" style="left:783px;background:#a3cd39"><svg style="left:2px;top:1.5px" width="12" height="13"><path d="M1 13.2L6 1L11 13.2M2.7 9H9.3" fill="none" stroke="#fff" stroke-width="2"/></svg></div><div class="c r" style="left:801.5px;width:78px;letter-spacing:-0.9px;padding-right:0">1;<span style="letter-spacing:0">​</span></div><div class="c r" style="left:882.5px;width:78px;letter-spacing:-0.9px;padding-right:0">16000<span style="letter-spacing:0">​</span></div><div class="c r" style="left:963.5px;width:78px;letter-spacing:-0.9px;padding-right:0">4;<span style="letter-spacing:0">​</span></div></div><div class="row" style="top:503px"><div class="a" style="left:0px;top:0;width:80px;height:25px;background:#fff"></div><div class="a" style="left:81px;top:0;width:315px;height:25px;background:#fff"></div><div class="a" style="left:397px;top:0;width:80px;height:25px;background:#fff"></div><div class="a" style="left:478px;top:0;width:80px;height:25px;background:#fff"></div><div class="a" style="left:559px;top:0;width:80px;height:25px;background:#fff"></div><div class="a" style="left:640px;top:0;width:80px;height:25px;background:#fff"></div><div class="a" style="left:721px;top:0;width:80px;height:25px;background:#fff"></div><div class="a" style="left:802px;top:0;width:80px;height:25px;background:#fff"></div><div class="a" style="left:883px;top:0;width:80px;height:25px;background:#fff"></div><div class="a" style="left:964px;top:0;width:80px;height:25px;background:#fff"></div><div class="a" style="left:0;top:25px;width:80px;height:1px;background:#7d7d7d"></div><div class="a" style="left:81px;top:25px;width:964px;height:1px;background:#ededed"></div><div class="c r" style="left:-0.5px;width:78px;letter-spacing:-0.9px;padding-right:0">50<span style="letter-spacing:0">​</span></div><div class="c" style="letter-spacing:0.00px;left:83.5px;width:294px">Einbau Multisplitgeräte</div><div class="ic" style="left:378px;background:#063a8f"><svg style="left:0;top:0" width="16" height="16"><path d="M2.3 10.3L10 2.6L13.2 5.8L5.5 13.5Z" fill="#fff"/><path d="M10.8 1.8L11.8 0.8L15 4L14 5Z" fill="#fff"/><path d="M1.8 11L4.8 14L1 15Z" fill="#fff"/></svg></div><div class="c" style="letter-spacing:-0.7px;left:399.5px;width:77px">Wärmeer…</div><div class="c r" style="left:479.5px;width:58px;letter-spacing:-0.9px;padding-right:0">7824<span style="letter-spacing:0">​</span></div><div class="ic" style="left:540px;background:#063a8f"><svg style="left:0;top:0" width="16" height="16"><path d="M2.3 10.3L10 2.6L13.2 5.8L5.5 13.5Z" fill="#fff"/><path d="M10.8 1.8L11.8 0.8L15 4L14 5Z" fill="#fff"/><path d="M1.8 11L4.8 14L1 15Z" fill="#fff"/></svg></div><div class="c r" style="left:558.5px;width:78px;letter-spacing:-0.9px;padding-right:0">0<span style="letter-spacing:0">​</span></div><div class="c r" style="left:639.5px;width:78px;letter-spacing:-0.9px;padding-right:0">20<span style="letter-spacing:0">​</span></div><div class="c r" style="left:722.5px;width:58px;letter-spacing:-0.9px;padding-right:0">0<span style="letter-spacing:0">​</span></div><div class="ic" style="left:783px;background:#a3cd39"><svg style="left:2px;top:1.5px" width="12" height="13"><path d="M1 13.2L6 1L11 13.2M2.7 9H9.3" fill="none" stroke="#fff" stroke-width="2"/></svg></div><div class="c r" style="left:801.5px;width:78px;letter-spacing:-0.9px;padding-right:0">1;<span style="letter-spacing:0">​</span></div><div class="c r" style="left:882.5px;width:78px;letter-spacing:-0.9px;padding-right:0">7824<span style="letter-spacing:0">​</span></div><div class="c r" style="left:963.5px;width:78px;letter-spacing:-0.9px;padding-right:0">7;<span style="letter-spacing:0">​</span></div></div><div class="row" style="top:529px"><div class="a" style="left:0px;top:0;width:80px;height:25px;background:#fffde2"></div><div class="a" style="left:81px;top:0;width:315px;height:25px;background:#fffde2"></div><div class="a" style="left:397px;top:0;width:80px;height:25px;background:#fffde2"></div><div class="a" style="left:478px;top:0;width:80px;height:25px;background:#fffde2"></div><div class="a" style="left:559px;top:0;width:80px;height:25px;background:#fffde2"></div><div class="a" style="left:640px;top:0;width:80px;height:25px;background:#fffde2"></div><div class="a" style="left:721px;top:0;width:80px;height:25px;background:#fffde2"></div><div class="a" style="left:802px;top:0;width:80px;height:25px;background:#fffde2"></div><div class="a" style="left:883px;top:0;width:80px;height:25px;background:#fffde2"></div><div class="a" style="left:964px;top:0;width:80px;height:25px;background:#fffde2"></div><div class="a" style="left:0;top:25px;width:80px;height:1px;background:#7d7d7d"></div><div class="a" style="left:81px;top:25px;width:964px;height:1px;background:#ededed"></div><div class="c r" style="left:-0.5px;width:78px;letter-spacing:-0.9px;padding-right:0">11<span style="letter-spacing:0">​</span></div><div class="c" style="letter-spacing:0.00px;left:83.5px;width:294px">Heizleitungen alle dämmen</div><div class="ic" style="left:378px;background:#a3cd39"><svg style="left:2px;top:1.5px" width="12" height="13"><path d="M1 13.2L6 1L11 13.2M2.7 9H9.3" fill="none" stroke="#fff" stroke-width="2"/></svg></div><div class="c" style="letter-spacing:-0.7px;left:399.5px;width:77px">Wärmeve…</div><div class="c r" style="left:479.5px;width:58px;letter-spacing:-0.9px;padding-right:0">25<span style="letter-spacing:0">​</span></div><div class="ic" style="left:540px;background:#063a8f"><svg style="left:0;top:0" width="16" height="16"><path d="M2.3 10.3L10 2.6L13.2 5.8L5.5 13.5Z" fill="#fff"/><path d="M10.8 1.8L11.8 0.8L15 4L14 5Z" fill="#fff"/><path d="M1.8 11L4.8 14L1 15Z" fill="#fff"/></svg></div><div class="c r" style="left:558.5px;width:78px;letter-spacing:-0.9px;padding-right:0">0<span style="letter-spacing:0">​</span></div><div class="c r" style="left:639.5px;width:78px;letter-spacing:-0.9px;padding-right:0">30<span style="letter-spacing:0">​</span></div><div class="c r" style="left:722.5px;width:58px;letter-spacing:-0.9px;padding-right:0">0<span style="letter-spacing:0">​</span></div><div class="ic" style="left:783px;background:#a3cd39"><svg style="left:2px;top:1.5px" width="12" height="13"><path d="M1 13.2L6 1L11 13.2M2.7 9H9.3" fill="none" stroke="#fff" stroke-width="2"/></svg></div><div class="c r" style="left:801.5px;width:78px;letter-spacing:-0.9px;padding-right:0">V1;S1;A1;<span style="letter-spacing:0">​</span></div><div class="c r" style="left:882.5px;width:78px;letter-spacing:-0.9px;padding-right:0">7055<span style="letter-spacing:0">​</span></div><div class="c r" style="left:963.5px;width:78px;letter-spacing:-0.9px;padding-right:0">3;5;<span style="letter-spacing:0">​</span></div></div><div class="row" style="top:555px"><div class="a" style="left:0px;top:0;width:80px;height:25px;background:#fff"></div><div class="a" style="left:81px;top:0;width:315px;height:25px;background:#fff"></div><div class="a" style="left:397px;top:0;width:80px;height:25px;background:#fff"></div><div class="a" style="left:478px;top:0;width:80px;height:25px;background:#fff"></div><div class="a" style="left:559px;top:0;width:80px;height:25px;background:#fff"></div><div class="a" style="left:640px;top:0;width:80px;height:25px;background:#fff"></div><div class="a" style="left:721px;top:0;width:80px;height:25px;background:#fff"></div><div class="a" style="left:802px;top:0;width:80px;height:25px;background:#fff"></div><div class="a" style="left:883px;top:0;width:80px;height:25px;background:#fff"></div><div class="a" style="left:964px;top:0;width:80px;height:25px;background:#fff"></div><div class="a" style="left:0;top:25px;width:80px;height:1px;background:#7d7d7d"></div><div class="a" style="left:81px;top:25px;width:964px;height:1px;background:#ededed"></div><div class="c r" style="left:-0.5px;width:78px;letter-spacing:-0.9px;padding-right:0">18<span style="letter-spacing:0">​</span></div><div class="c" style="letter-spacing:0.00px;left:83.5px;width:294px">Elektronisch geregelte Heizungspumpe</div><div class="ic" style="left:378px;background:#a3cd39"><svg style="left:2px;top:1.5px" width="12" height="13"><path d="M1 13.2L6 1L11 13.2M2.7 9H9.3" fill="none" stroke="#fff" stroke-width="2"/></svg></div><div class="c" style="letter-spacing:-0.7px;left:399.5px;width:77px">Wärmeve…</div><div class="c r" style="left:479.5px;width:58px;letter-spacing:-0.9px;padding-right:0">600<span style="letter-spacing:0">​</span></div><div class="ic" style="left:540px;background:#063a8f"><svg style="left:0;top:0" width="16" height="16"><path d="M2.3 10.3L10 2.6L13.2 5.8L5.5 13.5Z" fill="#fff"/><path d="M10.8 1.8L11.8 0.8L15 4L14 5Z" fill="#fff"/><path d="M1.8 11L4.8 14L1 15Z" fill="#fff"/></svg></div><div class="c r" style="left:558.5px;width:78px;letter-spacing:-0.9px;padding-right:0">0<span style="letter-spacing:0">​</span></div><div class="c r" style="left:639.5px;width:78px;letter-spacing:-0.9px;padding-right:0">15<span style="letter-spacing:0">​</span></div><div class="c r" style="left:722.5px;width:58px;letter-spacing:-0.9px;padding-right:0">0<span style="letter-spacing:0">​</span></div><div class="ic" style="left:783px;background:#a3cd39"><svg style="left:2px;top:1.5px" width="12" height="13"><path d="M1 13.2L6 1L11 13.2M2.7 9H9.3" fill="none" stroke="#fff" stroke-width="2"/></svg></div><div class="c r" style="left:801.5px;width:78px;letter-spacing:-0.9px;padding-right:0">1;<span style="letter-spacing:0">​</span></div><div class="c r" style="left:882.5px;width:78px;letter-spacing:-0.9px;padding-right:0">600<span style="letter-spacing:0">​</span></div><div class="c r" style="left:963.5px;width:78px;letter-spacing:-0.9px;padding-right:0">3;5;<span style="letter-spacing:0">​</span></div></div><div class="row" style="top:581px"><div class="a" style="left:0px;top:0;width:80px;height:25px;background:#fffde2"></div><div class="a" style="left:81px;top:0;width:315px;height:25px;background:#fffde2"></div><div class="a" style="left:397px;top:0;width:80px;height:25px;background:#fffde2"></div><div class="a" style="left:478px;top:0;width:80px;height:25px;background:#fffde2"></div><div class="a" style="left:559px;top:0;width:80px;height:25px;background:#fffde2"></div><div class="a" style="left:640px;top:0;width:80px;height:25px;background:#fffde2"></div><div class="a" style="left:721px;top:0;width:80px;height:25px;background:#fffde2"></div><div class="a" style="left:802px;top:0;width:80px;height:25px;background:#fffde2"></div><div class="a" style="left:883px;top:0;width:80px;height:25px;background:#fffde2"></div><div class="a" style="left:964px;top:0;width:80px;height:25px;background:#fffde2"></div><div class="a" style="left:0;top:25px;width:80px;height:1px;background:#7d7d7d"></div><div class="a" style="left:81px;top:25px;width:964px;height:1px;background:#ededed"></div><div class="c r" style="left:-0.5px;width:78px;letter-spacing:-0.9px;padding-right:0">52<span style="letter-spacing:0">​</span></div><div class="c" style="letter-spacing:0.00px;left:83.5px;width:294px">Standort des Wärmeerzeugers</div><div class="ic" style="left:378px;background:#063a8f"><svg style="left:0;top:0" width="16" height="16"><path d="M2.3 10.3L10 2.6L13.2 5.8L5.5 13.5Z" fill="#fff"/><path d="M10.8 1.8L11.8 0.8L15 4L14 5Z" fill="#fff"/><path d="M1.8 11L4.8 14L1 15Z" fill="#fff"/></svg></div><div class="c" style="letter-spacing:-0.7px;left:399.5px;width:77px">Wärmeve…</div><div class="c r" style="left:479.5px;width:58px;letter-spacing:-0.9px;padding-right:0">0<span style="letter-spacing:0">​</span></div><div class="ic" style="left:540px;background:#063a8f"><svg style="left:0;top:0" width="16" height="16"><path d="M2.3 10.3L10 2.6L13.2 5.8L5.5 13.5Z" fill="#fff"/><path d="M10.8 1.8L11.8 0.8L15 4L14 5Z" fill="#fff"/><path d="M1.8 11L4.8 14L1 15Z" fill="#fff"/></svg></div><div class="c r" style="left:558.5px;width:78px;letter-spacing:-0.9px;padding-right:0">0<span style="letter-spacing:0">​</span></div><div class="c r" style="left:639.5px;width:78px;letter-spacing:-0.9px;padding-right:0">30<span style="letter-spacing:0">​</span></div><div class="c r" style="left:722.5px;width:58px;letter-spacing:-0.9px;padding-right:0">0<span style="letter-spacing:0">​</span></div><div class="ic" style="left:783px;background:#a3cd39"><svg style="left:2px;top:1.5px" width="12" height="13"><path d="M1 13.2L6 1L11 13.2M2.7 9H9.3" fill="none" stroke="#fff" stroke-width="2"/></svg></div><div class="c r" style="left:801.5px;width:78px;letter-spacing:-0.9px;padding-right:0">1;<span style="letter-spacing:0">​</span></div><div class="c r" style="left:882.5px;width:78px;letter-spacing:-0.9px;padding-right:0">0<span style="letter-spacing:0">​</span></div><div class="c r" style="left:963.5px;width:78px;letter-spacing:-0.9px;padding-right:0">7;<span style="letter-spacing:0">​</span></div></div><div class="row" style="top:607px"><div class="a" style="left:0px;top:0;width:80px;height:25px;background:#fff"></div><div class="a" style="left:81px;top:0;width:315px;height:25px;background:#fff"></div><div class="a" style="left:397px;top:0;width:80px;height:25px;background:#fff"></div><div class="a" style="left:478px;top:0;width:80px;height:25px;background:#fff"></div><div class="a" style="left:559px;top:0;width:80px;height:25px;background:#fff"></div><div class="a" style="left:640px;top:0;width:80px;height:25px;background:#fff"></div><div class="a" style="left:721px;top:0;width:80px;height:25px;background:#fff"></div><div class="a" style="left:802px;top:0;width:80px;height:25px;background:#fff"></div><div class="a" style="left:883px;top:0;width:80px;height:25px;background:#fff"></div><div class="a" style="left:964px;top:0;width:80px;height:25px;background:#fff"></div><div class="a" style="left:0;top:25px;width:80px;height:1px;background:#7d7d7d"></div><div class="a" style="left:81px;top:25px;width:964px;height:1px;background:#ededed"></div><div class="c r" style="left:-0.5px;width:78px;letter-spacing:-0.9px;padding-right:0">19<span style="letter-spacing:0">​</span></div><div class="c" style="letter-spacing:0.00px;left:83.5px;width:294px">Regelung Heizung Pellet</div><div class="ic" style="left:378px;background:#a3cd39"><svg style="left:2px;top:1.5px" width="12" height="13"><path d="M1 13.2L6 1L11 13.2M2.7 9H9.3" fill="none" stroke="#fff" stroke-width="2"/></svg></div><div class="c" style="letter-spacing:-0.7px;left:399.5px;width:77px">Wärmeab…</div><div class="c r" style="left:479.5px;width:58px;letter-spacing:-0.9px;padding-right:0">550<span style="letter-spacing:0">​</span></div><div class="ic" style="left:540px;background:#063a8f"><svg style="left:0;top:0" width="16" height="16"><path d="M2.3 10.3L10 2.6L13.2 5.8L5.5 13.5Z" fill="#fff"/><path d="M10.8 1.8L11.8 0.8L15 4L14 5Z" fill="#fff"/><path d="M1.8 11L4.8 14L1 15Z" fill="#fff"/></svg></div><div class="c r" style="left:558.5px;width:78px;letter-spacing:-0.9px;padding-right:0">150<span style="letter-spacing:0">​</span></div><div class="c r" style="left:639.5px;width:78px;letter-spacing:-0.9px;padding-right:0">20<span style="letter-spacing:0">​</span></div><div class="c r" style="left:722.5px;width:58px;letter-spacing:-0.9px;padding-right:0">0<span style="letter-spacing:0">​</span></div><div class="ic" style="left:783px;background:#a3cd39"><svg style="left:2px;top:1.5px" width="12" height="13"><path d="M1 13.2L6 1L11 13.2M2.7 9H9.3" fill="none" stroke="#fff" stroke-width="2"/></svg></div><div class="c r" style="left:801.5px;width:78px;letter-spacing:-0.9px;padding-right:0">1;<span style="letter-spacing:0">​</span></div><div class="c r" style="left:882.5px;width:78px;letter-spacing:-0.9px;padding-right:0">700<span style="letter-spacing:0">​</span></div><div class="c r" style="left:963.5px;width:78px;letter-spacing:-0.9px;padding-right:0">3;5;<span style="letter-spacing:0">​</span></div></div><div class="row" style="top:633px"><div class="a" style="left:0px;top:0;width:80px;height:25px;background:#fffde2"></div><div class="a" style="left:81px;top:0;width:315px;height:25px;background:#fffde2"></div><div class="a" style="left:397px;top:0;width:80px;height:25px;background:#fffde2"></div><div class="a" style="left:478px;top:0;width:80px;height:25px;background:#fffde2"></div><div class="a" style="left:559px;top:0;width:80px;height:25px;background:#fffde2"></div><div class="a" style="left:640px;top:0;width:80px;height:25px;background:#fffde2"></div><div class="a" style="left:721px;top:0;width:80px;height:25px;background:#fffde2"></div><div class="a" style="left:802px;top:0;width:80px;height:25px;background:#fffde2"></div><div class="a" style="left:883px;top:0;width:80px;height:25px;background:#fffde2"></div><div class="a" style="left:964px;top:0;width:80px;height:25px;background:#fffde2"></div><div class="a" style="left:0;top:25px;width:80px;height:1px;background:#7d7d7d"></div><div class="a" style="left:81px;top:25px;width:964px;height:1px;background:#ededed"></div><div class="c r" style="left:-0.5px;width:78px;letter-spacing:-0.9px;padding-right:0">37<span style="letter-spacing:0">​</span></div><div class="c" style="letter-spacing:0.00px;left:83.5px;width:294px">Hydraulischer Abgleich</div><div class="ic" style="left:378px;background:#a3cd39"><svg style="left:2px;top:1.5px" width="12" height="13"><path d="M1 13.2L6 1L11 13.2M2.7 9H9.3" fill="none" stroke="#fff" stroke-width="2"/></svg></div><div class="c" style="letter-spacing:-0.7px;left:399.5px;width:77px">Wärmeab…</div><div class="c r" style="left:479.5px;width:58px;letter-spacing:-0.9px;padding-right:0">550<span style="letter-spacing:0">​</span></div><div class="ic" style="left:540px;background:#063a8f"><svg style="left:0;top:0" width="16" height="16"><path d="M2.3 10.3L10 2.6L13.2 5.8L5.5 13.5Z" fill="#fff"/><path d="M10.8 1.8L11.8 0.8L15 4L14 5Z" fill="#fff"/><path d="M1.8 11L4.8 14L1 15Z" fill="#fff"/></svg></div><div class="c r" style="left:558.5px;width:78px;letter-spacing:-0.9px;padding-right:0">150<span style="letter-spacing:0">​</span></div><div class="c r" style="left:639.5px;width:78px;letter-spacing:-0.9px;padding-right:0">30<span style="letter-spacing:0">​</span></div><div class="c r" style="left:722.5px;width:58px;letter-spacing:-0.9px;padding-right:0">0<span style="letter-spacing:0">​</span></div><div class="ic" style="left:783px;background:#a3cd39"><svg style="left:2px;top:1.5px" width="12" height="13"><path d="M1 13.2L6 1L11 13.2M2.7 9H9.3" fill="none" stroke="#fff" stroke-width="2"/></svg></div><div class="c r" style="left:801.5px;width:78px;letter-spacing:-0.9px;padding-right:0">1;<span style="letter-spacing:0">​</span></div><div class="c r" style="left:882.5px;width:78px;letter-spacing:-0.9px;padding-right:0">700<span style="letter-spacing:0">​</span></div><div class="c r" style="left:963.5px;width:78px;letter-spacing:-0.9px;padding-right:0">2;<span style="letter-spacing:0">​</span></div></div><div class="row" style="top:659px"><div class="a" style="left:0px;top:0;width:80px;height:25px;background:#fff"></div><div class="a" style="left:81px;top:0;width:315px;height:25px;background:#fff"></div><div class="a" style="left:397px;top:0;width:80px;height:25px;background:#fff"></div><div class="a" style="left:478px;top:0;width:80px;height:25px;background:#fff"></div><div class="a" style="left:559px;top:0;width:80px;height:25px;background:#fff"></div><div class="a" style="left:640px;top:0;width:80px;height:25px;background:#fff"></div><div class="a" style="left:721px;top:0;width:80px;height:25px;background:#fff"></div><div class="a" style="left:802px;top:0;width:80px;height:25px;background:#fff"></div><div class="a" style="left:883px;top:0;width:80px;height:25px;background:#fff"></div><div class="a" style="left:964px;top:0;width:80px;height:25px;background:#fff"></div><div class="a" style="left:0;top:25px;width:80px;height:1px;background:#7d7d7d"></div><div class="a" style="left:81px;top:25px;width:964px;height:1px;background:#ededed"></div><div class="c r" style="left:-0.5px;width:78px;letter-spacing:-0.9px;padding-right:0">46<span style="letter-spacing:0">​</span></div><div class="c" style="letter-spacing:0.00px;left:83.5px;width:294px">Regelung Heizung Brennwertgerät</div><div class="ic" style="left:378px;background:#063a8f"><svg style="left:0;top:0" width="16" height="16"><path d="M2.3 10.3L10 2.6L13.2 5.8L5.5 13.5Z" fill="#fff"/><path d="M10.8 1.8L11.8 0.8L15 4L14 5Z" fill="#fff"/><path d="M1.8 11L4.8 14L1 15Z" fill="#fff"/></svg></div><div class="c" style="letter-spacing:-0.7px;left:399.5px;width:77px">Wärmeab…</div><div class="c r" style="left:479.5px;width:58px;letter-spacing:-0.9px;padding-right:0">550<span style="letter-spacing:0">​</span></div><div class="ic" style="left:540px;background:#063a8f"><svg style="left:0;top:0" width="16" height="16"><path d="M2.3 10.3L10 2.6L13.2 5.8L5.5 13.5Z" fill="#fff"/><path d="M10.8 1.8L11.8 0.8L15 4L14 5Z" fill="#fff"/><path d="M1.8 11L4.8 14L1 15Z" fill="#fff"/></svg></div><div class="c r" style="left:558.5px;width:78px;letter-spacing:-0.9px;padding-right:0">150<span style="letter-spacing:0">​</span></div><div class="c r" style="left:639.5px;width:78px;letter-spacing:-0.9px;padding-right:0">20<span style="letter-spacing:0">​</span></div><div class="c r" style="left:722.5px;width:58px;letter-spacing:-0.9px;padding-right:0">0<span style="letter-spacing:0">​</span></div><div class="ic" style="left:783px;background:#a3cd39"><svg style="left:2px;top:1.5px" width="12" height="13"><path d="M1 13.2L6 1L11 13.2M2.7 9H9.3" fill="none" stroke="#fff" stroke-width="2"/></svg></div><div class="c r" style="left:801.5px;width:78px;letter-spacing:-0.9px;padding-right:0">1;<span style="letter-spacing:0">​</span></div><div class="c r" style="left:882.5px;width:78px;letter-spacing:-0.9px;padding-right:0">700<span style="letter-spacing:0">​</span></div><div class="c r" style="left:963.5px;width:78px;letter-spacing:-0.9px;padding-right:0">4;<span style="letter-spacing:0">​</span></div></div><div class="row" style="top:685px"><div class="a" style="left:0px;top:0;width:80px;height:25px;background:#fffde2"></div><div class="a" style="left:81px;top:0;width:315px;height:25px;background:#fffde2"></div><div class="a" style="left:397px;top:0;width:80px;height:25px;background:#fffde2"></div><div class="a" style="left:478px;top:0;width:80px;height:25px;background:#fffde2"></div><div class="a" style="left:559px;top:0;width:80px;height:25px;background:#fffde2"></div><div class="a" style="left:640px;top:0;width:80px;height:25px;background:#fffde2"></div><div class="a" style="left:721px;top:0;width:80px;height:25px;background:#fffde2"></div><div class="a" style="left:802px;top:0;width:80px;height:25px;background:#fffde2"></div><div class="a" style="left:883px;top:0;width:80px;height:25px;background:#fffde2"></div><div class="a" style="left:964px;top:0;width:80px;height:25px;background:#fffde2"></div><div class="a" style="left:0;top:25px;width:80px;height:1px;background:#7d7d7d"></div><div class="a" style="left:81px;top:25px;width:964px;height:1px;background:#ededed"></div><div class="c r" style="left:-0.5px;width:78px;letter-spacing:-0.9px;padding-right:0">53<span style="letter-spacing:0">​</span></div><div class="c" style="letter-spacing:0.00px;left:83.5px;width:294px">Regelung Heizung Multisplitgeräte</div><div class="ic" style="left:378px;background:#063a8f"><svg style="left:0;top:0" width="16" height="16"><path d="M2.3 10.3L10 2.6L13.2 5.8L5.5 13.5Z" fill="#fff"/><path d="M10.8 1.8L11.8 0.8L15 4L14 5Z" fill="#fff"/><path d="M1.8 11L4.8 14L1 15Z" fill="#fff"/></svg></div><div class="c" style="letter-spacing:-0.7px;left:399.5px;width:77px">Wärmeab…</div><div class="c r" style="left:479.5px;width:58px;letter-spacing:-0.9px;padding-right:0">715<span style="letter-spacing:0">​</span></div><div class="ic" style="left:540px;background:#063a8f"><svg style="left:0;top:0" width="16" height="16"><path d="M2.3 10.3L10 2.6L13.2 5.8L5.5 13.5Z" fill="#fff"/><path d="M10.8 1.8L11.8 0.8L15 4L14 5Z" fill="#fff"/><path d="M1.8 11L4.8 14L1 15Z" fill="#fff"/></svg></div><div class="c r" style="left:558.5px;width:78px;letter-spacing:-0.9px;padding-right:0">0<span style="letter-spacing:0">​</span></div><div class="c r" style="left:639.5px;width:78px;letter-spacing:-0.9px;padding-right:0">20<span style="letter-spacing:0">​</span></div><div class="c r" style="left:722.5px;width:58px;letter-spacing:-0.9px;padding-right:0">0<span style="letter-spacing:0">​</span></div><div class="ic" style="left:783px;background:#a3cd39"><svg style="left:2px;top:1.5px" width="12" height="13"><path d="M1 13.2L6 1L11 13.2M2.7 9H9.3" fill="none" stroke="#fff" stroke-width="2"/></svg></div><div class="c r" style="left:801.5px;width:78px;letter-spacing:-0.9px;padding-right:0">1;<span style="letter-spacing:0">​</span></div><div class="c r" style="left:882.5px;width:78px;letter-spacing:-0.9px;padding-right:0">715<span style="letter-spacing:0">​</span></div><div class="c r" style="left:963.5px;width:78px;letter-spacing:-0.9px;padding-right:0">7;<span style="letter-spacing:0">​</span></div></div><div class="row" style="top:711px"><div class="a" style="left:0px;top:0;width:80px;height:25px;background:#fff"></div><div class="a" style="left:81px;top:0;width:315px;height:25px;background:#fff"></div><div class="a" style="left:397px;top:0;width:80px;height:25px;background:#fff"></div><div class="a" style="left:478px;top:0;width:80px;height:25px;background:#fff"></div><div class="a" style="left:559px;top:0;width:80px;height:25px;background:#fff"></div><div class="a" style="left:640px;top:0;width:80px;height:25px;background:#fff"></div><div class="a" style="left:721px;top:0;width:80px;height:25px;background:#fff"></div><div class="a" style="left:802px;top:0;width:80px;height:25px;background:#fff"></div><div class="a" style="left:883px;top:0;width:80px;height:25px;background:#fff"></div><div class="a" style="left:964px;top:0;width:80px;height:25px;background:#fff"></div><div class="a" style="left:0;top:25px;width:80px;height:1px;background:#7d7d7d"></div><div class="a" style="left:81px;top:25px;width:964px;height:1px;background:#ededed"></div><div class="c r" style="left:-0.5px;width:78px;letter-spacing:-0.9px;padding-right:0">16<span style="letter-spacing:0">​</span></div><div class="c" style="letter-spacing:0.00px;left:83.5px;width:294px">Hocheffiziente Lüftungsanlage mit WRG</div><div class="ic" style="left:378px;background:#a3cd39"><svg style="left:2px;top:1.5px" width="12" height="13"><path d="M1 13.2L6 1L11 13.2M2.7 9H9.3" fill="none" stroke="#fff" stroke-width="2"/></svg></div><div class="c" style="left:399.5px;width:77px">Lüftung</div><div class="c r" style="left:479.5px;width:58px;letter-spacing:-0.9px;padding-right:0">15000<span style="letter-spacing:0">​</span></div><div class="ic" style="left:540px;background:#063a8f"><svg style="left:0;top:0" width="16" height="16"><path d="M2.3 10.3L10 2.6L13.2 5.8L5.5 13.5Z" fill="#fff"/><path d="M10.8 1.8L11.8 0.8L15 4L14 5Z" fill="#fff"/><path d="M1.8 11L4.8 14L1 15Z" fill="#fff"/></svg></div><div class="c r" style="left:558.5px;width:78px;letter-spacing:-0.9px;padding-right:0">0<span style="letter-spacing:0">​</span></div><div class="c r" style="left:639.5px;width:78px;letter-spacing:-0.9px;padding-right:0">25<span style="letter-spacing:0">​</span></div><div class="c r" style="left:722.5px;width:58px;letter-spacing:-0.9px;padding-right:0">0<span style="letter-spacing:0">​</span></div><div class="ic" style="left:783px;background:#a3cd39"><svg style="left:2px;top:1.5px" width="12" height="13"><path d="M1 13.2L6 1L11 13.2M2.7 9H9.3" fill="none" stroke="#fff" stroke-width="2"/></svg></div><div class="c r" style="left:801.5px;width:78px;letter-spacing:-0.9px;padding-right:0">1;<span style="letter-spacing:0">​</span></div><div class="c r" style="left:882.5px;width:78px;letter-spacing:-0.9px;padding-right:0">15000<span style="letter-spacing:0">​</span></div><div class="c r" style="left:963.5px;width:78px;letter-spacing:-0.9px;padding-right:0">1;5;<span style="letter-spacing:0">​</span></div></div><div class="row" style="top:737px"><div class="a" style="left:0px;top:0;width:80px;height:25px;background:#fffde2"></div><div class="a" style="left:81px;top:0;width:315px;height:25px;background:#fffde2"></div><div class="a" style="left:397px;top:0;width:80px;height:25px;background:#fffde2"></div><div class="a" style="left:478px;top:0;width:80px;height:25px;background:#fffde2"></div><div class="a" style="left:559px;top:0;width:80px;height:25px;background:#fffde2"></div><div class="a" style="left:640px;top:0;width:80px;height:25px;background:#fffde2"></div><div class="a" style="left:721px;top:0;width:80px;height:25px;background:#fffde2"></div><div class="a" style="left:802px;top:0;width:80px;height:25px;background:#fffde2"></div><div class="a" style="left:883px;top:0;width:80px;height:25px;background:#fffde2"></div><div class="a" style="left:964px;top:0;width:80px;height:25px;background:#fffde2"></div><div class="a" style="left:0;top:25px;width:80px;height:1px;background:#7d7d7d"></div><div class="a" style="left:81px;top:25px;width:964px;height:1px;background:#ededed"></div><div class="c r" style="left:-0.5px;width:78px;letter-spacing:-0.9px;padding-right:0">34<span style="letter-spacing:0">​</span></div><div class="c" style="letter-spacing:0.00px;left:83.5px;width:294px">Solaranlage mit Heizungsunterstützung</div><div class="ic" style="left:378px;background:#a3cd39"><svg style="left:2px;top:1.5px" width="12" height="13"><path d="M1 13.2L6 1L11 13.2M2.7 9H9.3" fill="none" stroke="#fff" stroke-width="2"/></svg></div><div class="c" style="letter-spacing:-0.7px;left:399.5px;width:77px">Regenera…</div><div class="c r" style="left:479.5px;width:58px;letter-spacing:-0.9px;padding-right:0">750<span style="letter-spacing:0">​</span></div><div class="ic" style="left:540px;background:#063a8f"><svg style="left:0;top:0" width="16" height="16"><path d="M2.3 10.3L10 2.6L13.2 5.8L5.5 13.5Z" fill="#fff"/><path d="M10.8 1.8L11.8 0.8L15 4L14 5Z" fill="#fff"/><path d="M1.8 11L4.8 14L1 15Z" fill="#fff"/></svg></div><div class="c r" style="left:558.5px;width:78px;letter-spacing:-0.9px;padding-right:0">1500<span style="letter-spacing:0">​</span></div><div class="c r" style="left:639.5px;width:78px;letter-spacing:-0.9px;padding-right:0">20<span style="letter-spacing:0">​</span></div><div class="c r" style="left:722.5px;width:58px;letter-spacing:-0.9px;padding-right:0">0<span style="letter-spacing:0">​</span></div><div class="ic" style="left:783px;background:#a3cd39"><svg style="left:2px;top:1.5px" width="12" height="13"><path d="M1 13.2L6 1L11 13.2M2.7 9H9.3" fill="none" stroke="#fff" stroke-width="2"/></svg></div><div class="c r" style="left:801.5px;width:78px;letter-spacing:-0.9px;padding-right:0">TW1;HZ1;<span style="letter-spacing:0">​</span></div><div class="c r" style="left:882.5px;width:78px;letter-spacing:-0.9px;padding-right:0">12750<span style="letter-spacing:0">​</span></div><div class="c r" style="left:963.5px;width:78px;letter-spacing:-0.9px;padding-right:0">3;5;<span style="letter-spacing:0">​</span></div></div><div class="row" style="top:763px"><div class="a" style="left:0px;top:0;width:80px;height:25px;background:#fff"></div><div class="a" style="left:81px;top:0;width:315px;height:25px;background:#fff"></div><div class="a" style="left:397px;top:0;width:80px;height:25px;background:#fff"></div><div class="a" style="left:478px;top:0;width:80px;height:25px;background:#fff"></div><div class="a" style="left:559px;top:0;width:80px;height:25px;background:#fff"></div><div class="a" style="left:640px;top:0;width:80px;height:25px;background:#fff"></div><div class="a" style="left:721px;top:0;width:80px;height:25px;background:#fff"></div><div class="a" style="left:802px;top:0;width:80px;height:25px;background:#fff"></div><div class="a" style="left:883px;top:0;width:80px;height:25px;background:#fff"></div><div class="a" style="left:964px;top:0;width:80px;height:25px;background:#fff"></div><div class="a" style="left:0;top:25px;width:80px;height:1px;background:#7d7d7d"></div><div class="a" style="left:81px;top:25px;width:964px;height:1px;background:#ededed"></div><div class="c r" style="left:-0.5px;width:78px;letter-spacing:-0.9px;padding-right:0">51<span style="letter-spacing:0">​</span></div><div class="c" style="letter-spacing:0.00px;left:83.5px;width:294px">Elektro-Durchlauferhitzer</div><div class="ic" style="left:378px;background:#063a8f"><svg style="left:0;top:0" width="16" height="16"><path d="M2.3 10.3L10 2.6L13.2 5.8L5.5 13.5Z" fill="#fff"/><path d="M10.8 1.8L11.8 0.8L15 4L14 5Z" fill="#fff"/><path d="M1.8 11L4.8 14L1 15Z" fill="#fff"/></svg></div><div class="c" style="letter-spacing:-0.7px;left:399.5px;width:77px">TWW-Ber…</div><div class="c r" style="left:479.5px;width:58px;letter-spacing:-0.9px;padding-right:0">652<span style="letter-spacing:0">​</span></div><div class="ic" style="left:540px;background:#063a8f"><svg style="left:0;top:0" width="16" height="16"><path d="M2.3 10.3L10 2.6L13.2 5.8L5.5 13.5Z" fill="#fff"/><path d="M10.8 1.8L11.8 0.8L15 4L14 5Z" fill="#fff"/><path d="M1.8 11L4.8 14L1 15Z" fill="#fff"/></svg></div><div class="c r" style="left:558.5px;width:78px;letter-spacing:-0.9px;padding-right:0">0<span style="letter-spacing:0">​</span></div><div class="c r" style="left:639.5px;width:78px;letter-spacing:-0.9px;padding-right:0">15<span style="letter-spacing:0">​</span></div><div class="c r" style="left:722.5px;width:58px;letter-spacing:-0.9px;padding-right:0">0<span style="letter-spacing:0">​</span></div><div class="ic" style="left:783px;background:#a3cd39"><svg style="left:2px;top:1.5px" width="12" height="13"><path d="M1 13.2L6 1L11 13.2M2.7 9H9.3" fill="none" stroke="#fff" stroke-width="2"/></svg></div><div class="c r" style="left:801.5px;width:78px;letter-spacing:-0.9px;padding-right:0">1;<span style="letter-spacing:0">​</span></div><div class="c r" style="left:882.5px;width:78px;letter-spacing:-0.9px;padding-right:0">652<span style="letter-spacing:0">​</span></div><div class="c r" style="left:963.5px;width:78px;letter-spacing:-0.9px;padding-right:0">4;7;<span style="letter-spacing:0">​</span></div></div><div class="row" style="top:789px"><div class="a" style="left:0px;top:0;width:80px;height:25px;background:#fffde2"></div><div class="a" style="left:81px;top:0;width:315px;height:25px;background:#fffde2"></div><div class="a" style="left:397px;top:0;width:80px;height:25px;background:#fffde2"></div><div class="a" style="left:478px;top:0;width:80px;height:25px;background:#fffde2"></div><div class="a" style="left:559px;top:0;width:80px;height:25px;background:#fffde2"></div><div class="a" style="left:640px;top:0;width:80px;height:25px;background:#fffde2"></div><div class="a" style="left:721px;top:0;width:80px;height:25px;background:#fffde2"></div><div class="a" style="left:802px;top:0;width:80px;height:25px;background:#fffde2"></div><div class="a" style="left:883px;top:0;width:80px;height:25px;background:#fffde2"></div><div class="a" style="left:964px;top:0;width:80px;height:25px;background:#fffde2"></div><div class="a" style="left:0;top:25px;width:80px;height:1px;background:#7d7d7d"></div><div class="a" style="left:81px;top:25px;width:964px;height:1px;background:#ededed"></div><div class="c r" style="left:-0.5px;width:78px;letter-spacing:-0.9px;padding-right:0">22<span style="letter-spacing:0">​</span></div><div class="c" style="letter-spacing:0.00px;left:83.5px;width:294px">TWW-Solarspeicher mittel - (500 l)</div><div class="ic" style="left:378px;background:#a3cd39"><svg style="left:2px;top:1.5px" width="12" height="13"><path d="M1 13.2L6 1L11 13.2M2.7 9H9.3" fill="none" stroke="#fff" stroke-width="2"/></svg></div><div class="c" style="letter-spacing:-0.7px;left:399.5px;width:77px">TWW-Spe…</div><div class="c r" style="left:479.5px;width:58px;letter-spacing:-0.9px;padding-right:0">2000<span style="letter-spacing:0">​</span></div><div class="ic" style="left:540px;background:#063a8f"><svg style="left:0;top:0" width="16" height="16"><path d="M2.3 10.3L10 2.6L13.2 5.8L5.5 13.5Z" fill="#fff"/><path d="M10.8 1.8L11.8 0.8L15 4L14 5Z" fill="#fff"/><path d="M1.8 11L4.8 14L1 15Z" fill="#fff"/></svg></div><div class="c r" style="left:558.5px;width:78px;letter-spacing:-0.9px;padding-right:0">0<span style="letter-spacing:0">​</span></div><div class="c r" style="left:639.5px;width:78px;letter-spacing:-0.9px;padding-right:0">30<span style="letter-spacing:0">​</span></div><div class="c r" style="left:722.5px;width:58px;letter-spacing:-0.9px;padding-right:0">0<span style="letter-spacing:0">​</span></div><div class="ic" style="left:783px;background:#a3cd39"><svg style="left:2px;top:1.5px" width="12" height="13"><path d="M1 13.2L6 1L11 13.2M2.7 9H9.3" fill="none" stroke="#fff" stroke-width="2"/></svg></div><div class="c r" style="left:801.5px;width:78px;letter-spacing:-0.9px;padding-right:0">1;<span style="letter-spacing:0">​</span></div><div class="c r" style="left:882.5px;width:78px;letter-spacing:-0.9px;padding-right:0">2000<span style="letter-spacing:0">​</span></div><div class="c r" style="left:963.5px;width:78px;letter-spacing:-0.9px;padding-right:0">3;5;<span style="letter-spacing:0">​</span></div></div><div class="row" style="top:815px"><div class="a" style="left:0px;top:0;width:80px;height:25px;background:#fff"></div><div class="a" style="left:81px;top:0;width:315px;height:25px;background:#fff"></div><div class="a" style="left:397px;top:0;width:80px;height:25px;background:#fff"></div><div class="a" style="left:478px;top:0;width:80px;height:25px;background:#fff"></div><div class="a" style="left:559px;top:0;width:80px;height:25px;background:#fff"></div><div class="a" style="left:640px;top:0;width:80px;height:25px;background:#fff"></div><div class="a" style="left:721px;top:0;width:80px;height:25px;background:#fff"></div><div class="a" style="left:802px;top:0;width:80px;height:25px;background:#fff"></div><div class="a" style="left:883px;top:0;width:80px;height:25px;background:#fff"></div><div class="a" style="left:964px;top:0;width:80px;height:25px;background:#fff"></div><div class="a" style="left:0;top:25px;width:80px;height:1px;background:#7d7d7d"></div><div class="a" style="left:81px;top:25px;width:964px;height:1px;background:#ededed"></div><div class="c r" style="left:-0.5px;width:78px;letter-spacing:-0.9px;padding-right:0">20<span style="letter-spacing:0">​</span></div><div class="c" style="letter-spacing:-0.07px;left:83.5px;width:294px">Verbesserung der Wärmebrücken, pauschal</div><div class="ic" style="left:378px;background:#a3cd39"><svg style="left:2px;top:1.5px" width="12" height="13"><path d="M1 13.2L6 1L11 13.2M2.7 9H9.3" fill="none" stroke="#fff" stroke-width="2"/></svg></div><div class="c" style="letter-spacing:-0.7px;left:399.5px;width:77px">Wärmebr…</div><div class="c r" style="left:479.5px;width:58px;letter-spacing:-0.9px;padding-right:0">5000<span style="letter-spacing:0">​</span></div><div class="ic" style="left:540px;background:#063a8f"><svg style="left:0;top:0" width="16" height="16"><path d="M2.3 10.3L10 2.6L13.2 5.8L5.5 13.5Z" fill="#fff"/><path d="M10.8 1.8L11.8 0.8L15 4L14 5Z" fill="#fff"/><path d="M1.8 11L4.8 14L1 15Z" fill="#fff"/></svg></div><div class="c r" style="left:558.5px;width:78px;letter-spacing:-0.9px;padding-right:0">0<span style="letter-spacing:0">​</span></div><div class="c r" style="left:639.5px;width:78px;letter-spacing:-0.9px;padding-right:0">50<span style="letter-spacing:0">​</span></div><div class="c r" style="left:722.5px;width:58px;letter-spacing:-0.9px;padding-right:0">0<span style="letter-spacing:0">​</span></div><div class="ic" style="left:783px;background:#a3cd39"><svg style="left:2px;top:1.5px" width="12" height="13"><path d="M1 13.2L6 1L11 13.2M2.7 9H9.3" fill="none" stroke="#fff" stroke-width="2"/></svg></div><div class="c r" style="left:801.5px;width:78px;letter-spacing:-0.9px;padding-right:0"><span style="letter-spacing:0">​</span></div><div class="c r" style="left:882.5px;width:78px;letter-spacing:-0.9px;padding-right:0">5000<span style="letter-spacing:0">​</span></div><div class="c r" style="left:963.5px;width:78px;letter-spacing:-0.9px;padding-right:0">1;5;<span style="letter-spacing:0">​</span></div></div><div class="row" style="top:841px"><div class="a" style="left:0px;top:0;width:80px;height:25px;background:#fffde2"></div><div class="a" style="left:81px;top:0;width:315px;height:25px;background:#fffde2"></div><div class="a" style="left:397px;top:0;width:80px;height:25px;background:#fffde2"></div><div class="a" style="left:478px;top:0;width:80px;height:25px;background:#fffde2"></div><div class="a" style="left:559px;top:0;width:80px;height:25px;background:#fffde2"></div><div class="a" style="left:640px;top:0;width:80px;height:25px;background:#fffde2"></div><div class="a" style="left:721px;top:0;width:80px;height:25px;background:#fffde2"></div><div class="a" style="left:802px;top:0;width:80px;height:25px;background:#fffde2"></div><div class="a" style="left:883px;top:0;width:80px;height:25px;background:#fffde2"></div><div class="a" style="left:964px;top:0;width:80px;height:25px;background:#fffde2"></div><div class="a" style="left:0;top:25px;width:80px;height:1px;background:#7d7d7d"></div><div class="a" style="left:81px;top:25px;width:964px;height:1px;background:#ededed"></div><div class="c r" style="left:-0.5px;width:78px;letter-spacing:-0.9px;padding-right:0">3<span style="letter-spacing:0">​</span></div><div class="c" style="letter-spacing:0.00px;left:83.5px;width:294px">Drempelräume und Spitzboden hinzufügen</div><div class="ic" style="left:378px;background:#a3cd39"><svg style="left:2px;top:1.5px" width="12" height="13"><path d="M1 13.2L6 1L11 13.2M2.7 9H9.3" fill="none" stroke="#fff" stroke-width="2"/></svg></div><div class="c" style="letter-spacing:-0.7px;left:399.5px;width:77px">Gebäude…</div><div class="c r" style="left:479.5px;width:58px;letter-spacing:-0.9px;padding-right:0">25000<span style="letter-spacing:0">​</span></div><div class="ic" style="left:540px;background:#063a8f"><svg style="left:0;top:0" width="16" height="16"><path d="M2.3 10.3L10 2.6L13.2 5.8L5.5 13.5Z" fill="#fff"/><path d="M10.8 1.8L11.8 0.8L15 4L14 5Z" fill="#fff"/><path d="M1.8 11L4.8 14L1 15Z" fill="#fff"/></svg></div><div class="c r" style="left:558.5px;width:78px;letter-spacing:-0.9px;padding-right:0">0<span style="letter-spacing:0">​</span></div><div class="c r" style="left:639.5px;width:78px;letter-spacing:-0.9px;padding-right:0">50<span style="letter-spacing:0">​</span></div><div class="c r" style="left:722.5px;width:58px;letter-spacing:-0.9px;padding-right:0">0<span style="letter-spacing:0">​</span></div><div class="ic" style="left:783px;background:#a3cd39"><svg style="left:2px;top:1.5px" width="12" height="13"><path d="M1 13.2L6 1L11 13.2M2.7 9H9.3" fill="none" stroke="#fff" stroke-width="2"/></svg></div><div class="c r" style="left:801.5px;width:78px;letter-spacing:-0.9px;padding-right:0">1,14,21,;1,…<span style="letter-spacing:0">​</span></div><div class="c r" style="left:882.5px;width:78px;letter-spacing:-0.9px;padding-right:0">25000<span style="letter-spacing:0">​</span></div><div class="c r" style="left:963.5px;width:78px;letter-spacing:-0.9px;padding-right:0">2;5;<span style="letter-spacing:0">​</span></div></div><div class="row" style="top:867px"><div class="a" style="left:0px;top:0;width:80px;height:25px;background:#fff"></div><div class="a" style="left:81px;top:0;width:315px;height:25px;background:#fff"></div><div class="a" style="left:397px;top:0;width:80px;height:25px;background:#fff"></div><div class="a" style="left:478px;top:0;width:80px;height:25px;background:#fff"></div><div class="a" style="left:559px;top:0;width:80px;height:25px;background:#fff"></div><div class="a" style="left:640px;top:0;width:80px;height:25px;background:#fff"></div><div class="a" style="left:721px;top:0;width:80px;height:25px;background:#fff"></div><div class="a" style="left:802px;top:0;width:80px;height:25px;background:#fff"></div><div class="a" style="left:883px;top:0;width:80px;height:25px;background:#fff"></div><div class="a" style="left:964px;top:0;width:80px;height:25px;background:#fff"></div><div class="a" style="left:0;top:25px;width:80px;height:1px;background:#7d7d7d"></div><div class="a" style="left:81px;top:25px;width:964px;height:1px;background:#ededed"></div><div class="c r" style="left:-0.5px;width:78px;letter-spacing:-0.9px;padding-right:0">48<span style="letter-spacing:0">​</span></div><div class="c" style="letter-spacing:-0.11px;left:83.5px;width:294px">Drempel, Spitzboden und Gaube hinzufüg…</div><div class="ic" style="left:378px;background:#063a8f"><svg style="left:0;top:0" width="16" height="16"><path d="M2.3 10.3L10 2.6L13.2 5.8L5.5 13.5Z" fill="#fff"/><path d="M10.8 1.8L11.8 0.8L15 4L14 5Z" fill="#fff"/><path d="M1.8 11L4.8 14L1 15Z" fill="#fff"/></svg></div><div class="c" style="letter-spacing:-0.7px;left:399.5px;width:77px">Gebäude…</div><div class="c r" style="left:479.5px;width:58px;letter-spacing:-0.9px;padding-right:0">25000<span style="letter-spacing:0">​</span></div><div class="ic" style="left:540px;background:#063a8f"><svg style="left:0;top:0" width="16" height="16"><path d="M2.3 10.3L10 2.6L13.2 5.8L5.5 13.5Z" fill="#fff"/><path d="M10.8 1.8L11.8 0.8L15 4L14 5Z" fill="#fff"/><path d="M1.8 11L4.8 14L1 15Z" fill="#fff"/></svg></div><div class="c r" style="left:558.5px;width:78px;letter-spacing:-0.9px;padding-right:0">0<span style="letter-spacing:0">​</span></div><div class="c r" style="left:639.5px;width:78px;letter-spacing:-0.9px;padding-right:0">50<span style="letter-spacing:0">​</span></div><div class="c r" style="left:722.5px;width:58px;letter-spacing:-0.9px;padding-right:0">0<span style="letter-spacing:0">​</span></div><div class="ic" style="left:783px;background:#a3cd39"><svg style="left:2px;top:1.5px" width="12" height="13"><path d="M1 13.2L6 1L11 13.2M2.7 9H9.3" fill="none" stroke="#fff" stroke-width="2"/></svg></div><div class="c r" style="left:801.5px;width:78px;letter-spacing:-0.9px;padding-right:0">1,14,21,;1,…<span style="letter-spacing:0">​</span></div><div class="c r" style="left:882.5px;width:78px;letter-spacing:-0.9px;padding-right:0">25000<span style="letter-spacing:0">​</span></div><div class="c r" style="left:963.5px;width:78px;letter-spacing:-0.9px;padding-right:0">6;<span style="letter-spacing:0">​</span></div></div><div class="row" style="top:893px"><div class="a" style="left:0px;top:0;width:80px;height:25px;background:#fffde2"></div><div class="a" style="left:81px;top:0;width:315px;height:25px;background:#fffde2"></div><div class="a" style="left:397px;top:0;width:80px;height:25px;background:#fffde2"></div><div class="a" style="left:478px;top:0;width:80px;height:25px;background:#fffde2"></div><div class="a" style="left:559px;top:0;width:80px;height:25px;background:#fffde2"></div><div class="a" style="left:640px;top:0;width:80px;height:25px;background:#fffde2"></div><div class="a" style="left:721px;top:0;width:80px;height:25px;background:#fffde2"></div><div class="a" style="left:802px;top:0;width:80px;height:25px;background:#fffde2"></div><div class="a" style="left:883px;top:0;width:80px;height:25px;background:#fffde2"></div><div class="a" style="left:964px;top:0;width:80px;height:25px;background:#fffde2"></div><div class="a" style="left:0;top:25px;width:80px;height:1px;background:#7d7d7d"></div><div class="a" style="left:81px;top:25px;width:964px;height:1px;background:#ededed"></div><div class="c r" style="left:-0.5px;width:78px;letter-spacing:-0.9px;padding-right:0">14<span style="letter-spacing:0">​</span></div><div class="c" style="letter-spacing:0.00px;left:83.5px;width:294px">Pufferspeicher - (1000l)</div><div class="ic" style="left:378px;background:#a3cd39"><svg style="left:2px;top:1.5px" width="12" height="13"><path d="M1 13.2L6 1L11 13.2M2.7 9H9.3" fill="none" stroke="#fff" stroke-width="2"/></svg></div><div class="c" style="letter-spacing:-0.7px;left:399.5px;width:77px">Pufferspei…</div><div class="c r" style="left:479.5px;width:58px;letter-spacing:-0.9px;padding-right:0">2500<span style="letter-spacing:0">​</span></div><div class="ic" style="left:540px;background:#063a8f"><svg style="left:0;top:0" width="16" height="16"><path d="M2.3 10.3L10 2.6L13.2 5.8L5.5 13.5Z" fill="#fff"/><path d="M10.8 1.8L11.8 0.8L15 4L14 5Z" fill="#fff"/><path d="M1.8 11L4.8 14L1 15Z" fill="#fff"/></svg></div><div class="c r" style="left:558.5px;width:78px;letter-spacing:-0.9px;padding-right:0">0<span style="letter-spacing:0">​</span></div><div class="c r" style="left:639.5px;width:78px;letter-spacing:-0.9px;padding-right:0">20<span style="letter-spacing:0">​</span></div><div class="c r" style="left:722.5px;width:58px;letter-spacing:-0.9px;padding-right:0">0<span style="letter-spacing:0">​</span></div><div class="ic" style="left:783px;background:#a3cd39"><svg style="left:2px;top:1.5px" width="12" height="13"><path d="M1 13.2L6 1L11 13.2M2.7 9H9.3" fill="none" stroke="#fff" stroke-width="2"/></svg></div><div class="c r" style="left:801.5px;width:78px;letter-spacing:-0.9px;padding-right:0">1;<span style="letter-spacing:0">​</span></div><div class="c r" style="left:882.5px;width:78px;letter-spacing:-0.9px;padding-right:0">2500<span style="letter-spacing:0">​</span></div><div class="c r" style="left:963.5px;width:78px;letter-spacing:-0.9px;padding-right:0">3;5;<span style="letter-spacing:0">​</span></div></div><div class="row" style="top:919px"><div class="a" style="left:0px;top:0;width:80px;height:25px;background:#fff"></div><div class="a" style="left:81px;top:0;width:315px;height:25px;background:#fff"></div><div class="a" style="left:397px;top:0;width:80px;height:25px;background:#fff"></div><div class="a" style="left:478px;top:0;width:80px;height:25px;background:#fff"></div><div class="a" style="left:559px;top:0;width:80px;height:25px;background:#fff"></div><div class="a" style="left:640px;top:0;width:80px;height:25px;background:#fff"></div><div class="a" style="left:721px;top:0;width:80px;height:25px;background:#fff"></div><div class="a" style="left:802px;top:0;width:80px;height:25px;background:#fff"></div><div class="a" style="left:883px;top:0;width:80px;height:25px;background:#fff"></div><div class="a" style="left:964px;top:0;width:80px;height:25px;background:#fff"></div><div class="a" style="left:0;top:25px;width:80px;height:1px;background:#7d7d7d"></div><div class="a" style="left:81px;top:25px;width:964px;height:1px;background:#ededed"></div><div class="c r" style="left:-0.5px;width:78px;letter-spacing:-0.9px;padding-right:0">43<span style="letter-spacing:0">​</span></div><div class="c" style="letter-spacing:-0.39px;left:83.5px;width:294px">Einsparung Baunebenkosten für Sanierung …</div><div class="ic" style="left:378px;background:#a3cd39"><svg style="left:2px;top:1.5px" width="12" height="13"><path d="M1 13.2L6 1L11 13.2M2.7 9H9.3" fill="none" stroke="#fff" stroke-width="2"/></svg></div><div class="c" style="letter-spacing:-0.7px;left:399.5px;width:77px">ohne ener…</div><div class="c r" style="left:479.5px;width:58px;letter-spacing:-0.9px;padding-right:0">-15000<span style="letter-spacing:0">​</span></div><div class="ic" style="left:540px;background:#063a8f"><svg style="left:0;top:0" width="16" height="16"><path d="M2.3 10.3L10 2.6L13.2 5.8L5.5 13.5Z" fill="#fff"/><path d="M10.8 1.8L11.8 0.8L15 4L14 5Z" fill="#fff"/><path d="M1.8 11L4.8 14L1 15Z" fill="#fff"/></svg></div><div class="c r" style="left:558.5px;width:78px;letter-spacing:-0.9px;padding-right:0">0<span style="letter-spacing:0">​</span></div><div class="c r" style="left:639.5px;width:78px;letter-spacing:-0.9px;padding-right:0">30<span style="letter-spacing:0">​</span></div><div class="c r" style="left:722.5px;width:58px;letter-spacing:-0.9px;padding-right:0">0<span style="letter-spacing:0">​</span></div><div class="ic" style="left:783px;background:#a3cd39"><svg style="left:2px;top:1.5px" width="12" height="13"><path d="M1 13.2L6 1L11 13.2M2.7 9H9.3" fill="none" stroke="#fff" stroke-width="2"/></svg></div><div class="c r" style="left:801.5px;width:78px;letter-spacing:-0.9px;padding-right:0"><span style="letter-spacing:0">​</span></div><div class="c r" style="left:882.5px;width:78px;letter-spacing:-0.9px;padding-right:0">-15000<span style="letter-spacing:0">​</span></div><div class="c r" style="left:963.5px;width:78px;letter-spacing:-0.9px;padding-right:0">5;<span style="letter-spacing:0">​</span></div></div><div class="row" style="top:945px"><div class="a" style="left:0px;top:0;width:80px;height:25px;background:#fffde2"></div><div class="a" style="left:81px;top:0;width:315px;height:25px;background:#fffde2"></div><div class="a" style="left:397px;top:0;width:80px;height:25px;background:#fffde2"></div><div class="a" style="left:478px;top:0;width:80px;height:25px;background:#fffde2"></div><div class="a" style="left:559px;top:0;width:80px;height:25px;background:#fffde2"></div><div class="a" style="left:640px;top:0;width:80px;height:25px;background:#fffde2"></div><div class="a" style="left:721px;top:0;width:80px;height:25px;background:#fffde2"></div><div class="a" style="left:802px;top:0;width:80px;height:25px;background:#fffde2"></div><div class="a" style="left:883px;top:0;width:80px;height:25px;background:#fffde2"></div><div class="a" style="left:964px;top:0;width:80px;height:25px;background:#fffde2"></div><div class="a" style="left:0;top:25px;width:80px;height:1px;background:#7d7d7d"></div><div class="a" style="left:81px;top:25px;width:964px;height:1px;background:#ededed"></div><div class="c r" style="left:-0.5px;width:78px;letter-spacing:-0.9px;padding-right:0">54<span style="letter-spacing:0">​</span></div><div class="c" style="letter-spacing:0.00px;left:83.5px;width:294px">Photovoltaik-Anlage hinzufügen</div><div class="ic" style="left:378px;background:#063a8f"><svg style="left:0;top:0" width="16" height="16"><path d="M2.3 10.3L10 2.6L13.2 5.8L5.5 13.5Z" fill="#fff"/><path d="M10.8 1.8L11.8 0.8L15 4L14 5Z" fill="#fff"/><path d="M1.8 11L4.8 14L1 15Z" fill="#fff"/></svg></div><div class="c" style="letter-spacing:-0.7px;left:399.5px;width:77px">Photovolt…</div><div class="c r" style="left:479.5px;width:58px;letter-spacing:-0.9px;padding-right:0">1150<span style="letter-spacing:0">​</span></div><div class="ic" style="left:540px;background:#063a8f"><svg style="left:0;top:0" width="16" height="16"><path d="M2.3 10.3L10 2.6L13.2 5.8L5.5 13.5Z" fill="#fff"/><path d="M10.8 1.8L11.8 0.8L15 4L14 5Z" fill="#fff"/><path d="M1.8 11L4.8 14L1 15Z" fill="#fff"/></svg></div><div class="c r" style="left:558.5px;width:78px;letter-spacing:-0.9px;padding-right:0">500<span style="letter-spacing:0">​</span></div><div class="c r" style="left:639.5px;width:78px;letter-spacing:-0.9px;padding-right:0">30<span style="letter-spacing:0">​</span></div><div class="c r" style="left:722.5px;width:58px;letter-spacing:-0.9px;padding-right:0">0<span style="letter-spacing:0">​</span></div><div class="ic" style="left:783px;background:#a3cd39"><svg style="left:2px;top:1.5px" width="12" height="13"><path d="M1 13.2L6 1L11 13.2M2.7 9H9.3" fill="none" stroke="#fff" stroke-width="2"/></svg></div><div class="c r" style="left:801.5px;width:78px;letter-spacing:-0.9px;padding-right:0"><span style="letter-spacing:0">​</span></div><div class="c r" style="left:882.5px;width:78px;letter-spacing:-0.9px;padding-right:0">9884<span style="letter-spacing:0">​</span></div><div class="c r" style="left:963.5px;width:78px;letter-spacing:-0.9px;padding-right:0">7;<span style="letter-spacing:0">​</span></div></div><div class="row" style="top:971px"><div class="a" style="left:0px;top:0;width:80px;height:25px;background:#fff"></div><div class="a" style="left:81px;top:0;width:315px;height:25px;background:#fff"></div><div class="a" style="left:397px;top:0;width:80px;height:25px;background:#fff"></div><div class="a" style="left:478px;top:0;width:80px;height:25px;background:#fff"></div><div class="a" style="left:559px;top:0;width:80px;height:25px;background:#fff"></div><div class="a" style="left:640px;top:0;width:80px;height:25px;background:#fff"></div><div class="a" style="left:721px;top:0;width:80px;height:25px;background:#fff"></div><div class="a" style="left:802px;top:0;width:80px;height:25px;background:#fff"></div><div class="a" style="left:883px;top:0;width:80px;height:25px;background:#fff"></div><div class="a" style="left:964px;top:0;width:80px;height:25px;background:#fff"></div><div class="a" style="left:0;top:25px;width:80px;height:1px;background:#7d7d7d"></div><div class="a" style="left:81px;top:25px;width:964px;height:1px;background:#ededed"></div><div class="c r" style="left:-0.5px;width:78px;letter-spacing:-0.9px;padding-right:0">36<span style="letter-spacing:0">​</span></div><div class="c" style="letter-spacing:0.00px;left:83.5px;width:294px">Baubegleitung Dachausbau</div><div class="ic" style="left:378px;background:#a3cd39"><svg style="left:2px;top:1.5px" width="12" height="13"><path d="M1 13.2L6 1L11 13.2M2.7 9H9.3" fill="none" stroke="#fff" stroke-width="2"/></svg></div><div class="c" style="letter-spacing:-0.7px;left:399.5px;width:77px">Baubeglei…</div><div class="c r" style="left:479.5px;width:58px;letter-spacing:-0.9px;padding-right:0">2500<span style="letter-spacing:0">​</span></div><div class="ic" style="left:540px;background:#063a8f"><svg style="left:0;top:0" width="16" height="16"><path d="M2.3 10.3L10 2.6L13.2 5.8L5.5 13.5Z" fill="#fff"/><path d="M10.8 1.8L11.8 0.8L15 4L14 5Z" fill="#fff"/><path d="M1.8 11L4.8 14L1 15Z" fill="#fff"/></svg></div><div class="c r" style="left:558.5px;width:78px;letter-spacing:-0.9px;padding-right:0">0<span style="letter-spacing:0">​</span></div><div class="c r" style="left:639.5px;width:78px;letter-spacing:-0.9px;padding-right:0">30<span style="letter-spacing:0">​</span></div><div class="c r" style="left:722.5px;width:58px;letter-spacing:-0.9px;padding-right:0">0<span style="letter-spacing:0">​</span></div><div class="ic" style="left:783px;background:#a3cd39"><svg style="left:2px;top:1.5px" width="12" height="13"><path d="M1 13.2L6 1L11 13.2M2.7 9H9.3" fill="none" stroke="#fff" stroke-width="2"/></svg></div><div class="c r" style="left:801.5px;width:78px;letter-spacing:-0.9px;padding-right:0"><span style="letter-spacing:0">​</span></div><div class="c r" style="left:882.5px;width:78px;letter-spacing:-0.9px;padding-right:0">2500<span style="letter-spacing:0">​</span></div><div class="c r" style="left:963.5px;width:78px;letter-spacing:-0.9px;padding-right:0">2;<span style="letter-spacing:0">​</span></div></div><div class="row" style="top:997px"><div class="a" style="left:0px;top:0;width:80px;height:25px;background:#fffde2"></div><div class="a" style="left:81px;top:0;width:315px;height:25px;background:#fffde2"></div><div class="a" style="left:397px;top:0;width:80px;height:25px;background:#fffde2"></div><div class="a" style="left:478px;top:0;width:80px;height:25px;background:#fffde2"></div><div class="a" style="left:559px;top:0;width:80px;height:25px;background:#fffde2"></div><div class="a" style="left:640px;top:0;width:80px;height:25px;background:#fffde2"></div><div class="a" style="left:721px;top:0;width:80px;height:25px;background:#fffde2"></div><div class="a" style="left:802px;top:0;width:80px;height:25px;background:#fffde2"></div><div class="a" style="left:883px;top:0;width:80px;height:25px;background:#fffde2"></div><div class="a" style="left:964px;top:0;width:80px;height:25px;background:#fffde2"></div><div class="a" style="left:0;top:25px;width:80px;height:1px;background:#7d7d7d"></div><div class="a" style="left:81px;top:25px;width:964px;height:1px;background:#ededed"></div><div class="c r" style="left:-0.5px;width:78px;letter-spacing:-0.9px;padding-right:0">39<span style="letter-spacing:0">​</span></div><div class="c" style="letter-spacing:-0.18px;left:83.5px;width:294px">Baubegleitung Wärmedämmung, Fenster, …</div><div class="ic" style="left:378px;background:#a3cd39"><svg style="left:2px;top:1.5px" width="12" height="13"><path d="M1 13.2L6 1L11 13.2M2.7 9H9.3" fill="none" stroke="#fff" stroke-width="2"/></svg></div><div class="c" style="letter-spacing:-0.7px;left:399.5px;width:77px">Baubeglei…</div><div class="c r" style="left:479.5px;width:58px;letter-spacing:-0.9px;padding-right:0">4000<span style="letter-spacing:0">​</span></div><div class="ic" style="left:540px;background:#063a8f"><svg style="left:0;top:0" width="16" height="16"><path d="M2.3 10.3L10 2.6L13.2 5.8L5.5 13.5Z" fill="#fff"/><path d="M10.8 1.8L11.8 0.8L15 4L14 5Z" fill="#fff"/><path d="M1.8 11L4.8 14L1 15Z" fill="#fff"/></svg></div><div class="c r" style="left:558.5px;width:78px;letter-spacing:-0.9px;padding-right:0">0<span style="letter-spacing:0">​</span></div><div class="c r" style="left:639.5px;width:78px;letter-spacing:-0.9px;padding-right:0">30<span style="letter-spacing:0">​</span></div><div class="c r" style="left:722.5px;width:58px;letter-spacing:-0.9px;padding-right:0">0<span style="letter-spacing:0">​</span></div><div class="ic" style="left:783px;background:#a3cd39"><svg style="left:2px;top:1.5px" width="12" height="13"><path d="M1 13.2L6 1L11 13.2M2.7 9H9.3" fill="none" stroke="#fff" stroke-width="2"/></svg></div><div class="c r" style="left:801.5px;width:78px;letter-spacing:-0.9px;padding-right:0"><span style="letter-spacing:0">​</span></div><div class="c r" style="left:882.5px;width:78px;letter-spacing:-0.9px;padding-right:0">4000<span style="letter-spacing:0">​</span></div><div class="c r" style="left:963.5px;width:78px;letter-spacing:-0.9px;padding-right:0">1;<span style="letter-spacing:0">​</span></div></div><div class="row" style="top:1023px"><div class="a" style="left:0px;top:0;width:80px;height:25px;background:#fff"></div><div class="a" style="left:81px;top:0;width:315px;height:25px;background:#fff"></div><div class="a" style="left:397px;top:0;width:80px;height:25px;background:#fff"></div><div class="a" style="left:478px;top:0;width:80px;height:25px;background:#fff"></div><div class="a" style="left:559px;top:0;width:80px;height:25px;background:#fff"></div><div class="a" style="left:640px;top:0;width:80px;height:25px;background:#fff"></div><div class="a" style="left:721px;top:0;width:80px;height:25px;background:#fff"></div><div class="a" style="left:802px;top:0;width:80px;height:25px;background:#fff"></div><div class="a" style="left:883px;top:0;width:80px;height:25px;background:#fff"></div><div class="a" style="left:964px;top:0;width:80px;height:25px;background:#fff"></div><div class="a" style="left:0;top:25px;width:80px;height:1px;background:#7d7d7d"></div><div class="a" style="left:81px;top:25px;width:964px;height:1px;background:#ededed"></div><div class="c r" style="left:-0.5px;width:78px;letter-spacing:-0.9px;padding-right:0">42<span style="letter-spacing:0">​</span></div><div class="c" style="letter-spacing:0.00px;left:83.5px;width:294px">Baubegleitung Heizung und Solaranlage</div><div class="ic" style="left:378px;background:#a3cd39"><svg style="left:2px;top:1.5px" width="12" height="13"><path d="M1 13.2L6 1L11 13.2M2.7 9H9.3" fill="none" stroke="#fff" stroke-width="2"/></svg></div><div class="c" style="letter-spacing:-0.7px;left:399.5px;width:77px">Baubeglei…</div><div class="c r" style="left:479.5px;width:58px;letter-spacing:-0.9px;padding-right:0">1500<span style="letter-spacing:0">​</span></div><div class="ic" style="left:540px;background:#063a8f"><svg style="left:0;top:0" width="16" height="16"><path d="M2.3 10.3L10 2.6L13.2 5.8L5.5 13.5Z" fill="#fff"/><path d="M10.8 1.8L11.8 0.8L15 4L14 5Z" fill="#fff"/><path d="M1.8 11L4.8 14L1 15Z" fill="#fff"/></svg></div><div class="c r" style="left:558.5px;width:78px;letter-spacing:-0.9px;padding-right:0">0<span style="letter-spacing:0">​</span></div><div class="c r" style="left:639.5px;width:78px;letter-spacing:-0.9px;padding-right:0">30<span style="letter-spacing:0">​</span></div><div class="c r" style="left:722.5px;width:58px;letter-spacing:-0.9px;padding-right:0">0<span style="letter-spacing:0">​</span></div><div class="ic" style="left:783px;background:#a3cd39"><svg style="left:2px;top:1.5px" width="12" height="13"><path d="M1 13.2L6 1L11 13.2M2.7 9H9.3" fill="none" stroke="#fff" stroke-width="2"/></svg></div><div class="c r" style="left:801.5px;width:78px;letter-spacing:-0.9px;padding-right:0"><span style="letter-spacing:0">​</span></div><div class="c r" style="left:882.5px;width:78px;letter-spacing:-0.9px;padding-right:0">1500<span style="letter-spacing:0">​</span></div><div class="c r" style="left:963.5px;width:78px;letter-spacing:-0.9px;padding-right:0">3;<span style="letter-spacing:0">​</span></div></div><div class="row" style="top:1049px"><div class="a" style="left:0px;top:0;width:80px;height:25px;background:#fffde2"></div><div class="a" style="left:81px;top:0;width:315px;height:25px;background:#fffde2"></div><div class="a" style="left:397px;top:0;width:80px;height:25px;background:#fffde2"></div><div class="a" style="left:478px;top:0;width:80px;height:25px;background:#fffde2"></div><div class="a" style="left:559px;top:0;width:80px;height:25px;background:#fffde2"></div><div class="a" style="left:640px;top:0;width:80px;height:25px;background:#fffde2"></div><div class="a" style="left:721px;top:0;width:80px;height:25px;background:#fffde2"></div><div class="a" style="left:802px;top:0;width:80px;height:25px;background:#fffde2"></div><div class="a" style="left:883px;top:0;width:80px;height:25px;background:#fffde2"></div><div class="a" style="left:964px;top:0;width:80px;height:25px;background:#fffde2"></div><div class="a" style="left:0;top:25px;width:80px;height:1px;background:#7d7d7d"></div><div class="a" style="left:81px;top:25px;width:964px;height:1px;background:#ededed"></div><div class="c r" style="left:-0.5px;width:78px;letter-spacing:-0.9px;padding-right:0">47<span style="letter-spacing:0">​</span></div><div class="c" style="letter-spacing:0.00px;left:83.5px;width:294px">Baubegleitung Sanierung in einzem Zug</div><div class="ic" style="left:378px;background:#063a8f"><svg style="left:0;top:0" width="16" height="16"><path d="M2.3 10.3L10 2.6L13.2 5.8L5.5 13.5Z" fill="#fff"/><path d="M10.8 1.8L11.8 0.8L15 4L14 5Z" fill="#fff"/><path d="M1.8 11L4.8 14L1 15Z" fill="#fff"/></svg></div><div class="c" style="letter-spacing:-0.7px;left:399.5px;width:77px">Baubeglei…</div><div class="c r" style="left:479.5px;width:58px;letter-spacing:-0.9px;padding-right:0">8000<span style="letter-spacing:0">​</span></div><div class="ic" style="left:540px;background:#063a8f"><svg style="left:0;top:0" width="16" height="16"><path d="M2.3 10.3L10 2.6L13.2 5.8L5.5 13.5Z" fill="#fff"/><path d="M10.8 1.8L11.8 0.8L15 4L14 5Z" fill="#fff"/><path d="M1.8 11L4.8 14L1 15Z" fill="#fff"/></svg></div><div class="c r" style="left:558.5px;width:78px;letter-spacing:-0.9px;padding-right:0">0<span style="letter-spacing:0">​</span></div><div class="c r" style="left:639.5px;width:78px;letter-spacing:-0.9px;padding-right:0">30<span style="letter-spacing:0">​</span></div><div class="c r" style="left:722.5px;width:58px;letter-spacing:-0.9px;padding-right:0">0<span style="letter-spacing:0">​</span></div><div class="ic" style="left:783px;background:#a3cd39"><svg style="left:2px;top:1.5px" width="12" height="13"><path d="M1 13.2L6 1L11 13.2M2.7 9H9.3" fill="none" stroke="#fff" stroke-width="2"/></svg></div><div class="c r" style="left:801.5px;width:78px;letter-spacing:-0.9px;padding-right:0"><span style="letter-spacing:0">​</span></div><div class="c r" style="left:882.5px;width:78px;letter-spacing:-0.9px;padding-right:0">8000<span style="letter-spacing:0">​</span></div><div class="c r" style="left:963.5px;width:78px;letter-spacing:-0.9px;padding-right:0">5;<span style="letter-spacing:0">​</span></div></div><div class="a" style="left:504px;top:191px;width:1px;height:884px;background:#9a9a9a"></div><div class="a" style="left:504px;top:191px;width:1px;height:26px;background:#e6e6e6"></div><div class="a" style="left:820px;top:191px;width:1px;height:884px;background:#e9e9e9"></div><div class="a" style="left:901px;top:191px;width:1px;height:884px;background:#e9e9e9"></div><div class="a" style="left:982px;top:191px;width:1px;height:884px;background:#e9e9e9"></div><div class="a" style="left:1063px;top:191px;width:1px;height:884px;background:#e9e9e9"></div><div class="a" style="left:1144px;top:191px;width:1px;height:884px;background:#e9e9e9"></div><div class="a" style="left:1225px;top:191px;width:1px;height:884px;background:#e9e9e9"></div><div class="a" style="left:1306px;top:191px;width:1px;height:884px;background:#e9e9e9"></div><div class="a" style="left:1387px;top:191px;width:1px;height:884px;background:#e9e9e9"></div><div class="a" style="left:1468px;top:191px;width:1px;height:884px;background:#e9e9e9"></div><div class="a" style="left:1699px;top:107px;width:278px;height:1002px;background:#f0f0f0"></div><div class="a" style="left:1703px;top:107px;width:245px;height:25px;background:#fff;border:1px solid #e3e3e3;border-bottom:none"></div><div class="t" style="left:1707px;top:113.5px;font-size:14.6px;width:218px;overflow:hidden">Wärmedämmung, Fenster, Lüftung</div><svg style="left:1934px;top:117px" width="10" height="6"><path d="M0.5 0.5L5 5L9.5 0.5" fill="none" stroke="#444" stroke-width="1"/></svg><div class="a" style="left:1950px;top:109px;width:21px;height:21px;background:#9bcb3c;border:1.5px solid #1f64b8;border-radius:3px"></div><svg style="left:1954px;top:112px" width="13" height="15"><path d="M1 14.5L6.5 1L12 14.5M3 10H10" fill="none" stroke="#fff" stroke-width="1.6"/></svg><div class="a" style="left:1703px;top:132px;width:256px;height:950px;background:#7f7f7f"></div><div class="card" style="top:135px;height:416px"></div><div class="card" style="top:557px;height:128px"></div><div class="card" style="top:691px;height:86.5px"></div><div class="card" style="top:783px;height:102px"></div><div class="card" style="top:890px;height:122px"></div><div class="card" style="top:1018px;height:64px"></div><svg style="left:1962px;top:138px" width="13" height="10"><path d="M0.5 9.5L6.5 0.5L12.5 9.5Z" fill="#999"/></svg><div class="a" style="left:1963px;top:155px;width:11px;height:843px;background:#8a8a8a;border-radius:6px"></div><svg style="left:1962px;top:1067px" width="13" height="10"><path d="M0.5 0.5L6.5 9.5L12.5 0.5Z" fill="#999"/></svg><div class="t" style="left:1716px;top:145.7px;font-size:22px;color:#1b1b28">GEG 2024</div><div class="t" style="left:1716px;top:170.5px;font-size:16.3px;color:#1b1b28">DIN V 18599</div><div class="a" style="left:1916px;top:149px;width:22px;height:22px;border-radius:50%;background:#b32124;box-shadow:0 0 1px rgba(0,0,0,.4)"></div><div class="box" style="top:195px;height:165px"><div class="strip"></div><div class="a" style="left:22px;top:0;width:190px;height:165px;background:#f0b22f"></div></div><div class="vt" style="left:1727px;top:314px;font-size:11px">Effizienzklasse</div><svg style="left:1803px;top:223.5px;filter:drop-shadow(1px 1px 1.2px rgba(0,0,0,.4))" width="80" height="111"><path d="M0 0H76.5V13H15V47H74.5V60.5H15V97H79.5V110H0Z" fill="#fff"/></svg><div class="t" style="left:1793.5px;top:337.5px;font-size:16.7px;color:#fff;text-shadow:1px 1px 2px rgba(0,0,0,.45)"><b>136,3</b> kWh/(m²a)</div><div class="box" style="top:369px;height:61px"><div class="strip"></div><div class="bar" style="top:0;width:114px;background:#d3d3d3">77,5 kWh/(m²a)</div><div class="bar" style="top:20px;width:160px;background:#4183b8">108,5 kWh/(m²a)</div><div class="bar" style="top:41px;width:190px;background:linear-gradient(90deg,#4c8a0e 0%,#9ccb2d 25%,#fdd72c 50%,#f3a431 72%,#b41f20 100%)">153,5 kWh/(m²a)</div></div><div class="vt" style="left:1726.5px;top:407px;font-size:11.5px">Q<span style="font-size:7px;position:relative;top:-2px;margin-left:0.5px">P</span></div><div class="box" style="top:439px;height:62px"><div class="strip"></div><div class="bar" style="top:0;width:97px;background:#d3d3d3">0,40 W/(m²K)</div><div class="bar" style="top:20px;width:172px;background:#4183b8">0,70 W/(m²K)</div><div class="bar" style="top:41px;width:131px;background:linear-gradient(90deg,#4c8a0e 0%,#9ccb2d 30%,#fdd72c 70%,#f3a431 100%)">0,53 W/(m²K)</div></div><div class="vt" style="left:1726.5px;top:473.5px;font-size:11.5px">H<span style="font-size:8px;position:relative;top:-1px;margin-left:1px">T</span></div><div class="box" style="top:509px;height:22px"><div class="strip"></div><div class="a" style="left:22px;top:0;width:41px;height:22px;background:#b52024"></div><div class="a" style="left:66px;top:0;width:15px;height:22px;background:#b52024"></div><div class="a" style="left:84px;top:0;width:16px;height:22px;background:#b52024"></div><div class="a" style="left:103px;top:0;width:15px;height:22px;background:#b52024"></div><div class="a" style="left:121px;top:0;width:88px;height:22px;background:#b52024"></div></div><div class="t" style="right:192px;top:515px;font-size:11.5px;font-weight:bold;color:#fff">40</div><div class="t" style="right:174px;top:515px;font-size:11.5px;font-weight:bold;color:#fff">55</div><div class="t" style="right:155px;top:515px;font-size:11.5px;font-weight:bold;color:#fff">70</div><div class="t" style="right:137px;top:515px;font-size:11.5px;font-weight:bold;color:#fff">85</div><div class="t" style="right:46px;top:515px;font-size:11.5px;font-weight:bold;color:#fff">160</div><div class="vt" style="left:1726px;top:529.5px;font-size:12.5px">EH</div><div class="t" style="left:1716.5px;top:567.7px;font-size:22px;color:#1b1b28">Erneuerbare</div><div class="t" style="left:1716.5px;top:593.7px;font-size:22px;color:#1b1b28">Energien</div><div class="a" style="left:1916px;top:571px;width:22px;height:22px;border-radius:50%;border:1.3px solid #111"></div><div class="box" style="top:624px;height:41px"><div class="strip"></div><div class="bar" style="top:0;width:124px;background:#d3d3d3">65 %</div><div class="bar" style="top:20px;width:124px">0 %</div></div><div class="vt" style="left:1726px;top:653px;font-size:12px">EE</div><div class="t" style="left:1716px;top:702.2px;font-size:22px;color:#1b1b28">Sommerlicher</div><div class="t" style="left:1716px;top:728.7px;font-size:22px;color:#1b1b28">Wärmeschutz</div><div class="t" style="left:1716px;top:753.5px;font-size:16.3px;color:#1b1b28">DIN 4108-2</div><div class="a" style="left:1916px;top:705px;width:22px;height:22px;border-radius:50%;border:1.3px solid #111"></div><div class="t" style="left:1716px;top:794.7px;font-size:22px;color:#1b1b28">Heizlast</div><div class="t" style="left:1716px;top:820px;font-size:16.3px;color:#1b1b28">DIN 12831</div><div class="box" style="top:844px;height:20px"><div class="strip"></div><div class="bar" style="top:0;width:190px">15,2 kW</div></div><div class="t" style="left:1727px;top:848px;font-size:11px">⊖</div><div class="t" style="left:1716px;top:901.2px;font-size:22px;color:#1b1b28">Lüftungskonzept</div><div class="t" style="left:1716px;top:927px;font-size:16.3px;color:#1b1b28">DIN 1946-6</div><div class="a" style="left:1916px;top:904px;width:22px;height:22px;border-radius:50%;background:#7db319;box-shadow:0 0 1px rgba(0,0,0,.3)"></div><div class="box" style="top:951px;height:41px"><div class="strip"></div><div class="bar" style="top:0;width:95px;background:#d3d3d3">51 m³/h</div><div class="bar" style="top:20px;width:24px;background:#4183b8;overflow:visible">13 m³/h</div></div><div class="vt" style="left:1726px;top:990px">inf min</div><div class="t" style="left:1716px;top:1029.2px;font-size:22px;color:#1b1b28">Beratung</div><div class="t" style="left:1716px;top:1054px;font-size:16.3px;color:#1b1b28">DIN V 18599</div><div class="a" style="left:1703px;top:1082px;width:274px;height:27px;background:#f0f0f0"></div><div class="a" style="left:1723px;top:1077px;width:212px;height:5px;background:#fff;box-shadow:1px 0 2px rgba(0,0,0,.3)"><div class="strip"></div><div class="a" style="left:22px;top:0;width:95px;height:5px;background:linear-gradient(90deg,#4c8a0e,#9ccb2d 50%,#fdd72c)"></div></div></body></html>
